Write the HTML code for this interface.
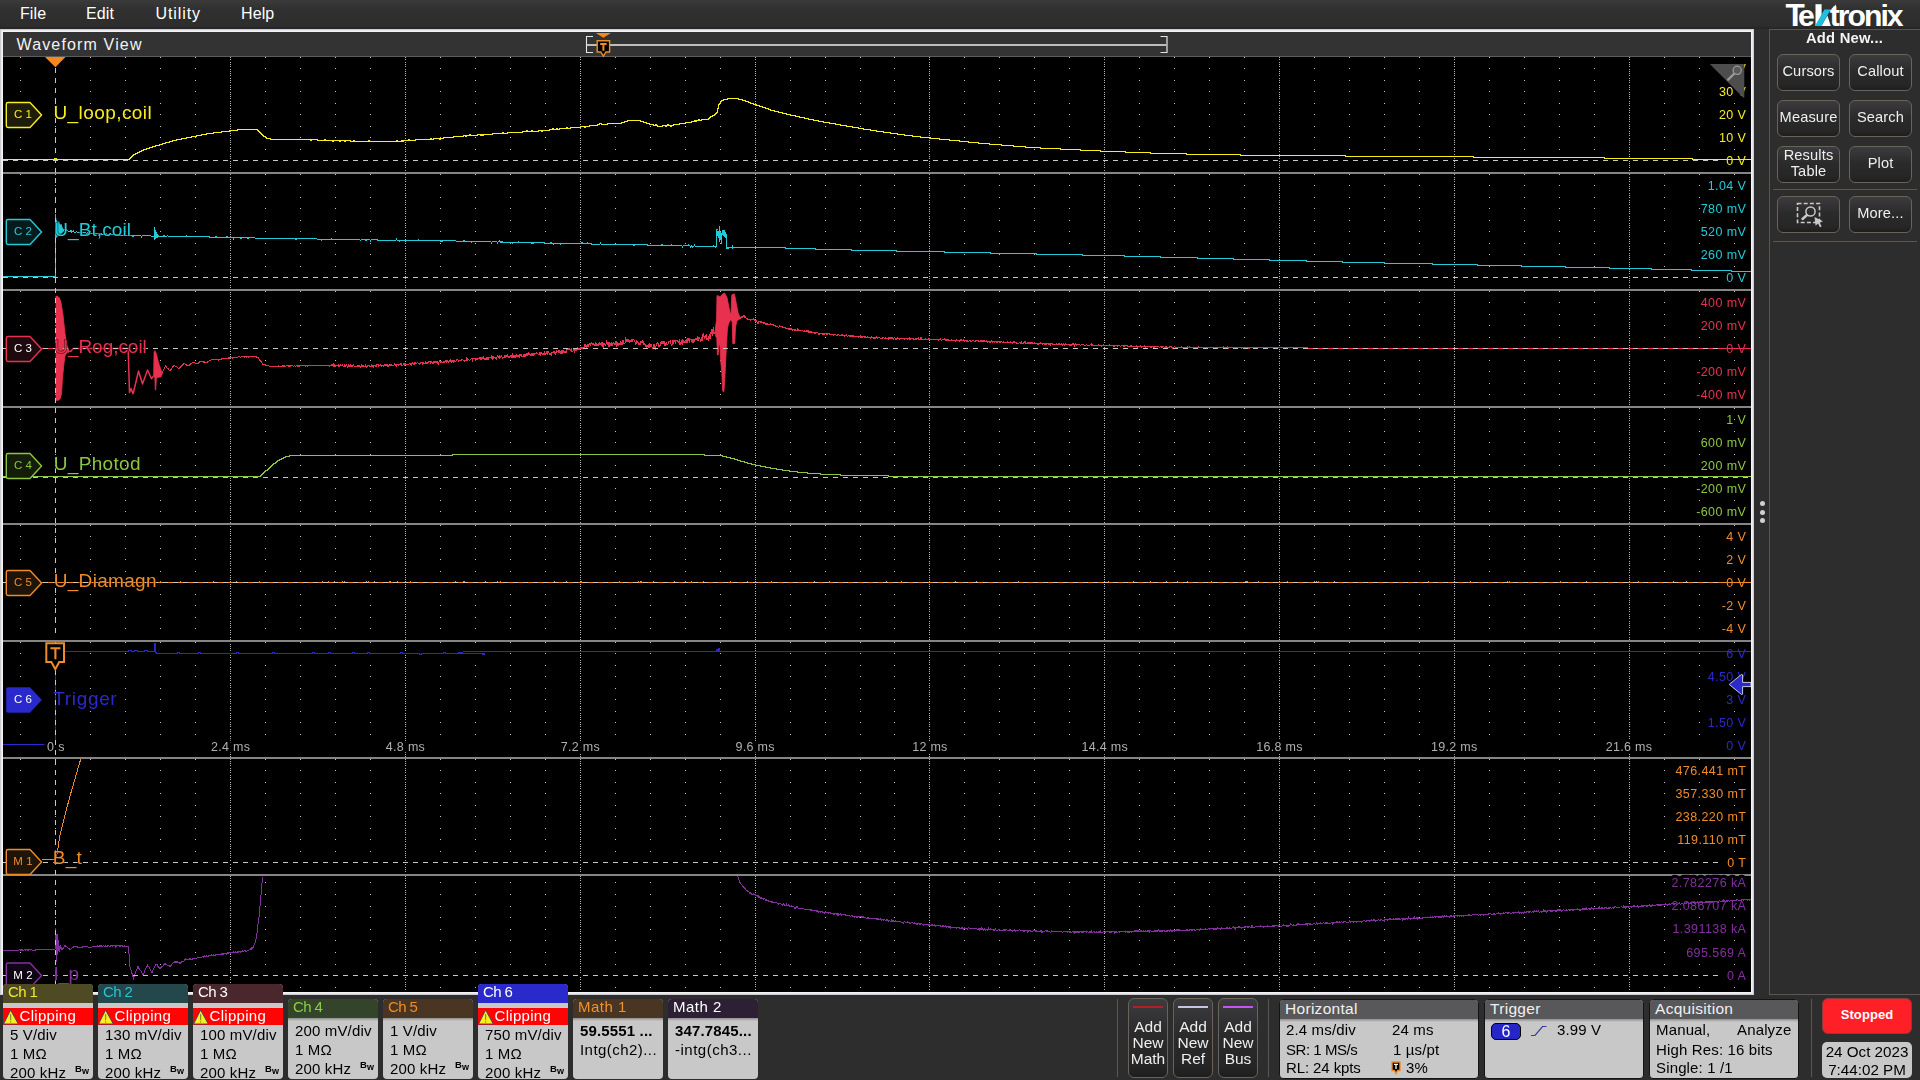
<!DOCTYPE html>
<html><head><meta charset="utf-8"><title>Scope</title>
<style>
*{box-sizing:border-box}
html,body{margin:0;padding:0;width:1920px;height:1080px;overflow:hidden;background:#2d2d2d;font-family:"Liberation Sans",sans-serif;color:#fff}
.abs{position:absolute}
#top{left:0;top:0;width:1920px;height:29px;background:linear-gradient(#3b3b3b 0,#303030 9px,#2d2d2d 26px,#232323 29px)}
.menu{position:absolute;top:4px;font-size:16px;line-height:20px;color:#fff;letter-spacing:0.1px}
#wvframe{left:3px;top:32px;width:1748px;height:960px;background:#000;box-shadow:0 0 0 1px #f4f4f6,0 0 0 2px #e8e8ec,0 0 0 3px #cdcdd1}
#wvhead{left:3px;top:32px;width:1748px;height:24px;background:#333}
#wvline{left:3px;top:56px;width:1748px;height:1px;background:#5c5c5c}
#wvtitle{left:16.5px;top:35px;font-size:16px;line-height:20px;letter-spacing:1.15px;color:#f2f2f2}
#plot{left:0;top:0;width:1920px;height:1080px;will-change:transform}
.dot{fill:none;stroke:#c4c4c4;stroke-width:1;stroke-dasharray:1 10.5;shape-rendering:crispEdges}
.vdot{stroke:#b4b4b4;stroke-width:1;stroke-dasharray:1 1.3;shape-rendering:crispEdges}
.zd{stroke:#c8c8c8;stroke-width:1;stroke-dasharray:5 5;shape-rendering:crispEdges}
.tagt{font-size:11.5px;text-anchor:middle;letter-spacing:0.1px;font-family:"Liberation Sans",sans-serif}
.wl{font-size:19px;stroke:#000;stroke-width:1.6px;stroke-opacity:0.55;paint-order:stroke;font-family:"Liberation Sans",sans-serif}
.sc{font-size:12.5px;text-anchor:end;letter-spacing:0.43px;stroke:#000;stroke-width:6.5px;paint-order:stroke;stroke-linejoin:round;font-family:"Liberation Sans",sans-serif}
.tl{font-size:12.5px;text-anchor:middle;letter-spacing:0.3px;fill:#b0b0b0;stroke:#000;stroke-width:6.5px;paint-order:stroke;stroke-linejoin:round;font-family:"Liberation Sans",sans-serif}
#side{left:1769px;top:29px;width:151px;height:966px;border:1px solid #5c5650;border-right:none}
.sbtn{position:absolute;width:63px;height:37px;border:1px solid #6a625b;border-radius:6px;background:linear-gradient(#3c3c3e 0,#2b2b2c 45%,#262626 85%,#1e1e1e 100%);color:#efefef;font-size:14.6px;line-height:16px;display:flex;align-items:center;justify-content:center;text-align:center;letter-spacing:0.15px;padding-bottom:2.6px}
.sep{position:absolute;height:1px;background:#5c5650;left:1773px;width:144px}
.badge{position:absolute;width:90px;border-radius:4px 4px 4px 4px;background:#c8c8c8;overflow:hidden;color:#000}
.bh{height:19px;font-size:15px;line-height:16px;padding-left:5px;letter-spacing:-0.6px;word-spacing:0px}
.bt{position:absolute;left:7px;font-size:15px;line-height:18px;color:#000;white-space:nowrap;letter-spacing:0.15px}
.clip{position:absolute;left:0;top:24px;width:90px;height:17px;background:#ff0404;color:#fff;font-size:15px;line-height:15px;padding-left:16.5px;letter-spacing:0.3px}
.bw{position:absolute;right:4px;font-size:9px;line-height:10px;color:#000}
.ibox{position:absolute;top:999px;height:79.5px;border-radius:4px;background:#c8c8c8;border:1px solid #141414;overflow:hidden;color:#000}
.ih{height:19px;background:#58585a;color:#f0f0f0;font-size:15.5px;line-height:18px;padding-left:5px;letter-spacing:0.3px}
.it{position:absolute;font-size:15px;line-height:18px;white-space:nowrap;letter-spacing:0.15px}
.abtn{position:absolute;top:998px;width:40px;height:80px;border:1px solid #6a625b;border-radius:6px;background:linear-gradient(#3c3c3e 0,#2b2b2c 45%,#262626 85%,#1e1e1e 100%);color:#efefef;font-size:15.5px;line-height:16px;text-align:center;padding-top:19.5px}
.abtn i{position:absolute;left:4px;right:4px;top:7px;height:2px}
</style></head><body>
<div id="top" class="abs"></div>
<span class="menu" style="left:20px">File</span><span class="menu" style="left:86px">Edit</span><span class="menu" style="left:155.5px;letter-spacing:0.9px">Utility</span><span class="menu" style="left:241px">Help</span>
<svg class="abs" style="left:1780px;top:0px" width="130" height="29" viewBox="0 0 130 29"><g font-family="Liberation Sans, sans-serif" font-weight="bold" font-size="30.2" fill="#fff"><text x="5.6" y="25.9" font-size="31.6">T</text><text x="17.9" y="25.9">e</text><text x="49.8" y="25.9" letter-spacing="-2">tronix</text></g><rect x="35.5" y="4.2" width="6.1" height="21.7" fill="#fff"/><path d="M41.4 25.9 L47.4 15.4 L50.8 25.9Z" fill="#fff"/><path d="M50.6 9.8 L55.9 4.6 V9.8Z" fill="#fff"/><path d="M34.9 25.9 H41.3 L50.7 9.4 H44.4Z" fill="#1fbfe0"/></svg>

<div id="wvframe" class="abs"></div>
<div id="wvhead" class="abs"></div><div id="wvline" class="abs"></div>
<div id="wvtitle" class="abs">Waveform View</div>
<svg id="plot" class="abs" viewBox="0 0 1920 1080">
<defs><clipPath id="pc"><rect x="3" y="57" width="1748" height="935"/></clipPath></defs>
<g clip-path="url(#pc)">
<path d="M20.5 56.9V161.5M20.5 173.9V278.5M20.5 290.9V395.5M20.5 407.9V512.5M20.5 524.9V629.5M20.5 641.9V735.0M20.5 758.9V863.5" class="dot"/>
<path d="M20.5 882.4V991" class="dot" style="stroke-dasharray:1 10.6"/>
<path d="M55.5 56.9V161.5M55.5 173.9V278.5M55.5 290.9V395.5M55.5 407.9V512.5M55.5 524.9V629.5M55.5 641.9V735.0M55.5 758.9V863.5" class="dot"/>
<path d="M55.5 882.4V991" class="dot" style="stroke-dasharray:1 10.6"/>
<path d="M90.5 56.9V161.5M90.5 173.9V278.5M90.5 290.9V395.5M90.5 407.9V512.5M90.5 524.9V629.5M90.5 641.9V735.0M90.5 758.9V863.5" class="dot"/>
<path d="M90.5 882.4V991" class="dot" style="stroke-dasharray:1 10.6"/>
<path d="M125.5 56.9V161.5M125.5 173.9V278.5M125.5 290.9V395.5M125.5 407.9V512.5M125.5 524.9V629.5M125.5 641.9V735.0M125.5 758.9V863.5" class="dot"/>
<path d="M125.5 882.4V991" class="dot" style="stroke-dasharray:1 10.6"/>
<path d="M160.5 56.9V161.5M160.5 173.9V278.5M160.5 290.9V395.5M160.5 407.9V512.5M160.5 524.9V629.5M160.5 641.9V735.0M160.5 758.9V863.5" class="dot"/>
<path d="M160.5 882.4V991" class="dot" style="stroke-dasharray:1 10.6"/>
<path d="M195.5 56.9V161.5M195.5 173.9V278.5M195.5 290.9V395.5M195.5 407.9V512.5M195.5 524.9V629.5M195.5 641.9V735.0M195.5 758.9V863.5" class="dot"/>
<path d="M195.5 882.4V991" class="dot" style="stroke-dasharray:1 10.6"/>
<path d="M265.5 56.9V161.5M265.5 173.9V278.5M265.5 290.9V395.5M265.5 407.9V512.5M265.5 524.9V629.5M265.5 641.9V735.0M265.5 758.9V863.5" class="dot"/>
<path d="M265.5 882.4V991" class="dot" style="stroke-dasharray:1 10.6"/>
<path d="M300.5 56.9V161.5M300.5 173.9V278.5M300.5 290.9V395.5M300.5 407.9V512.5M300.5 524.9V629.5M300.5 641.9V735.0M300.5 758.9V863.5" class="dot"/>
<path d="M300.5 882.4V991" class="dot" style="stroke-dasharray:1 10.6"/>
<path d="M335.5 56.9V161.5M335.5 173.9V278.5M335.5 290.9V395.5M335.5 407.9V512.5M335.5 524.9V629.5M335.5 641.9V735.0M335.5 758.9V863.5" class="dot"/>
<path d="M335.5 882.4V991" class="dot" style="stroke-dasharray:1 10.6"/>
<path d="M370.5 56.9V161.5M370.5 173.9V278.5M370.5 290.9V395.5M370.5 407.9V512.5M370.5 524.9V629.5M370.5 641.9V735.0M370.5 758.9V863.5" class="dot"/>
<path d="M370.5 882.4V991" class="dot" style="stroke-dasharray:1 10.6"/>
<path d="M440.5 56.9V161.5M440.5 173.9V278.5M440.5 290.9V395.5M440.5 407.9V512.5M440.5 524.9V629.5M440.5 641.9V735.0M440.5 758.9V863.5" class="dot"/>
<path d="M440.5 882.4V991" class="dot" style="stroke-dasharray:1 10.6"/>
<path d="M475.5 56.9V161.5M475.5 173.9V278.5M475.5 290.9V395.5M475.5 407.9V512.5M475.5 524.9V629.5M475.5 641.9V735.0M475.5 758.9V863.5" class="dot"/>
<path d="M475.5 882.4V991" class="dot" style="stroke-dasharray:1 10.6"/>
<path d="M510.5 56.9V161.5M510.5 173.9V278.5M510.5 290.9V395.5M510.5 407.9V512.5M510.5 524.9V629.5M510.5 641.9V735.0M510.5 758.9V863.5" class="dot"/>
<path d="M510.5 882.4V991" class="dot" style="stroke-dasharray:1 10.6"/>
<path d="M545.5 56.9V161.5M545.5 173.9V278.5M545.5 290.9V395.5M545.5 407.9V512.5M545.5 524.9V629.5M545.5 641.9V735.0M545.5 758.9V863.5" class="dot"/>
<path d="M545.5 882.4V991" class="dot" style="stroke-dasharray:1 10.6"/>
<path d="M615.5 56.9V161.5M615.5 173.9V278.5M615.5 290.9V395.5M615.5 407.9V512.5M615.5 524.9V629.5M615.5 641.9V735.0M615.5 758.9V863.5" class="dot"/>
<path d="M615.5 882.4V991" class="dot" style="stroke-dasharray:1 10.6"/>
<path d="M650.5 56.9V161.5M650.5 173.9V278.5M650.5 290.9V395.5M650.5 407.9V512.5M650.5 524.9V629.5M650.5 641.9V735.0M650.5 758.9V863.5" class="dot"/>
<path d="M650.5 882.4V991" class="dot" style="stroke-dasharray:1 10.6"/>
<path d="M685.5 56.9V161.5M685.5 173.9V278.5M685.5 290.9V395.5M685.5 407.9V512.5M685.5 524.9V629.5M685.5 641.9V735.0M685.5 758.9V863.5" class="dot"/>
<path d="M685.5 882.4V991" class="dot" style="stroke-dasharray:1 10.6"/>
<path d="M720.5 56.9V161.5M720.5 173.9V278.5M720.5 290.9V395.5M720.5 407.9V512.5M720.5 524.9V629.5M720.5 641.9V735.0M720.5 758.9V863.5" class="dot"/>
<path d="M720.5 882.4V991" class="dot" style="stroke-dasharray:1 10.6"/>
<path d="M790.5 56.9V161.5M790.5 173.9V278.5M790.5 290.9V395.5M790.5 407.9V512.5M790.5 524.9V629.5M790.5 641.9V735.0M790.5 758.9V863.5" class="dot"/>
<path d="M790.5 882.4V991" class="dot" style="stroke-dasharray:1 10.6"/>
<path d="M825.5 56.9V161.5M825.5 173.9V278.5M825.5 290.9V395.5M825.5 407.9V512.5M825.5 524.9V629.5M825.5 641.9V735.0M825.5 758.9V863.5" class="dot"/>
<path d="M825.5 882.4V991" class="dot" style="stroke-dasharray:1 10.6"/>
<path d="M860.5 56.9V161.5M860.5 173.9V278.5M860.5 290.9V395.5M860.5 407.9V512.5M860.5 524.9V629.5M860.5 641.9V735.0M860.5 758.9V863.5" class="dot"/>
<path d="M860.5 882.4V991" class="dot" style="stroke-dasharray:1 10.6"/>
<path d="M894.5 56.9V161.5M894.5 173.9V278.5M894.5 290.9V395.5M894.5 407.9V512.5M894.5 524.9V629.5M894.5 641.9V735.0M894.5 758.9V863.5" class="dot"/>
<path d="M894.5 882.4V991" class="dot" style="stroke-dasharray:1 10.6"/>
<path d="M964.5 56.9V161.5M964.5 173.9V278.5M964.5 290.9V395.5M964.5 407.9V512.5M964.5 524.9V629.5M964.5 641.9V735.0M964.5 758.9V863.5" class="dot"/>
<path d="M964.5 882.4V991" class="dot" style="stroke-dasharray:1 10.6"/>
<path d="M999.5 56.9V161.5M999.5 173.9V278.5M999.5 290.9V395.5M999.5 407.9V512.5M999.5 524.9V629.5M999.5 641.9V735.0M999.5 758.9V863.5" class="dot"/>
<path d="M999.5 882.4V991" class="dot" style="stroke-dasharray:1 10.6"/>
<path d="M1034.5 56.9V161.5M1034.5 173.9V278.5M1034.5 290.9V395.5M1034.5 407.9V512.5M1034.5 524.9V629.5M1034.5 641.9V735.0M1034.5 758.9V863.5" class="dot"/>
<path d="M1034.5 882.4V991" class="dot" style="stroke-dasharray:1 10.6"/>
<path d="M1069.5 56.9V161.5M1069.5 173.9V278.5M1069.5 290.9V395.5M1069.5 407.9V512.5M1069.5 524.9V629.5M1069.5 641.9V735.0M1069.5 758.9V863.5" class="dot"/>
<path d="M1069.5 882.4V991" class="dot" style="stroke-dasharray:1 10.6"/>
<path d="M1139.5 56.9V161.5M1139.5 173.9V278.5M1139.5 290.9V395.5M1139.5 407.9V512.5M1139.5 524.9V629.5M1139.5 641.9V735.0M1139.5 758.9V863.5" class="dot"/>
<path d="M1139.5 882.4V991" class="dot" style="stroke-dasharray:1 10.6"/>
<path d="M1174.5 56.9V161.5M1174.5 173.9V278.5M1174.5 290.9V395.5M1174.5 407.9V512.5M1174.5 524.9V629.5M1174.5 641.9V735.0M1174.5 758.9V863.5" class="dot"/>
<path d="M1174.5 882.4V991" class="dot" style="stroke-dasharray:1 10.6"/>
<path d="M1209.5 56.9V161.5M1209.5 173.9V278.5M1209.5 290.9V395.5M1209.5 407.9V512.5M1209.5 524.9V629.5M1209.5 641.9V735.0M1209.5 758.9V863.5" class="dot"/>
<path d="M1209.5 882.4V991" class="dot" style="stroke-dasharray:1 10.6"/>
<path d="M1244.5 56.9V161.5M1244.5 173.9V278.5M1244.5 290.9V395.5M1244.5 407.9V512.5M1244.5 524.9V629.5M1244.5 641.9V735.0M1244.5 758.9V863.5" class="dot"/>
<path d="M1244.5 882.4V991" class="dot" style="stroke-dasharray:1 10.6"/>
<path d="M1314.5 56.9V161.5M1314.5 173.9V278.5M1314.5 290.9V395.5M1314.5 407.9V512.5M1314.5 524.9V629.5M1314.5 641.9V735.0M1314.5 758.9V863.5" class="dot"/>
<path d="M1314.5 882.4V991" class="dot" style="stroke-dasharray:1 10.6"/>
<path d="M1349.5 56.9V161.5M1349.5 173.9V278.5M1349.5 290.9V395.5M1349.5 407.9V512.5M1349.5 524.9V629.5M1349.5 641.9V735.0M1349.5 758.9V863.5" class="dot"/>
<path d="M1349.5 882.4V991" class="dot" style="stroke-dasharray:1 10.6"/>
<path d="M1384.5 56.9V161.5M1384.5 173.9V278.5M1384.5 290.9V395.5M1384.5 407.9V512.5M1384.5 524.9V629.5M1384.5 641.9V735.0M1384.5 758.9V863.5" class="dot"/>
<path d="M1384.5 882.4V991" class="dot" style="stroke-dasharray:1 10.6"/>
<path d="M1419.5 56.9V161.5M1419.5 173.9V278.5M1419.5 290.9V395.5M1419.5 407.9V512.5M1419.5 524.9V629.5M1419.5 641.9V735.0M1419.5 758.9V863.5" class="dot"/>
<path d="M1419.5 882.4V991" class="dot" style="stroke-dasharray:1 10.6"/>
<path d="M1489.5 56.9V161.5M1489.5 173.9V278.5M1489.5 290.9V395.5M1489.5 407.9V512.5M1489.5 524.9V629.5M1489.5 641.9V735.0M1489.5 758.9V863.5" class="dot"/>
<path d="M1489.5 882.4V991" class="dot" style="stroke-dasharray:1 10.6"/>
<path d="M1524.5 56.9V161.5M1524.5 173.9V278.5M1524.5 290.9V395.5M1524.5 407.9V512.5M1524.5 524.9V629.5M1524.5 641.9V735.0M1524.5 758.9V863.5" class="dot"/>
<path d="M1524.5 882.4V991" class="dot" style="stroke-dasharray:1 10.6"/>
<path d="M1559.5 56.9V161.5M1559.5 173.9V278.5M1559.5 290.9V395.5M1559.5 407.9V512.5M1559.5 524.9V629.5M1559.5 641.9V735.0M1559.5 758.9V863.5" class="dot"/>
<path d="M1559.5 882.4V991" class="dot" style="stroke-dasharray:1 10.6"/>
<path d="M1594.5 56.9V161.5M1594.5 173.9V278.5M1594.5 290.9V395.5M1594.5 407.9V512.5M1594.5 524.9V629.5M1594.5 641.9V735.0M1594.5 758.9V863.5" class="dot"/>
<path d="M1594.5 882.4V991" class="dot" style="stroke-dasharray:1 10.6"/>
<path d="M1664.5 56.9V161.5M1664.5 173.9V278.5M1664.5 290.9V395.5M1664.5 407.9V512.5M1664.5 524.9V629.5M1664.5 641.9V735.0M1664.5 758.9V863.5" class="dot"/>
<path d="M1664.5 882.4V991" class="dot" style="stroke-dasharray:1 10.6"/>
<path d="M1699.5 56.9V161.5M1699.5 173.9V278.5M1699.5 290.9V395.5M1699.5 407.9V512.5M1699.5 524.9V629.5M1699.5 641.9V735.0M1699.5 758.9V863.5" class="dot"/>
<path d="M1699.5 882.4V991" class="dot" style="stroke-dasharray:1 10.6"/>
<path d="M1734.5 56.9V161.5M1734.5 173.9V278.5M1734.5 290.9V395.5M1734.5 407.9V512.5M1734.5 524.9V629.5M1734.5 641.9V735.0M1734.5 758.9V863.5" class="dot"/>
<path d="M1734.5 882.4V991" class="dot" style="stroke-dasharray:1 10.6"/>
<line x1="230.7" x2="230.7" y1="57" y2="990" class="vdot"/>
<line x1="405.5" x2="405.5" y1="57" y2="990" class="vdot"/>
<line x1="580.3" x2="580.3" y1="57" y2="990" class="vdot"/>
<line x1="755.1" x2="755.1" y1="57" y2="990" class="vdot"/>
<line x1="929.9" x2="929.9" y1="57" y2="990" class="vdot"/>
<line x1="1104.7" x2="1104.7" y1="57" y2="990" class="vdot"/>
<line x1="1279.6" x2="1279.6" y1="57" y2="990" class="vdot"/>
<line x1="1454.4" x2="1454.4" y1="57" y2="990" class="vdot"/>
<line x1="1629.2" x2="1629.2" y1="57" y2="990" class="vdot"/>
<rect x="3" y="160" width="1748" height="1" fill="#000"/>
<rect x="3" y="277" width="1748" height="1" fill="#000"/>
<rect x="3" y="348" width="1748" height="1" fill="#000"/>
<rect x="3" y="477" width="1748" height="1" fill="#000"/>
<rect x="3" y="582" width="1748" height="1" fill="#000"/>
<rect x="3" y="862" width="1748" height="1" fill="#000"/>
<rect x="3" y="975" width="1748" height="1" fill="#000"/>
<rect x="3" y="172" width="1748" height="2" fill="#858585"/>
<rect x="3" y="289" width="1748" height="2" fill="#858585"/>
<rect x="3" y="406" width="1748" height="2" fill="#858585"/>
<rect x="3" y="523" width="1748" height="2" fill="#858585"/>
<rect x="3" y="640" width="1748" height="2" fill="#858585"/>
<rect x="3" y="757" width="1748" height="2" fill="#858585"/>
<rect x="3" y="874" width="1748" height="2" fill="#858585"/>
<text x="1746.4" y="73.0" class="sc" fill="#f7ee1e">40 V</text>
<text x="1746.4" y="96.0" class="sc" fill="#f7ee1e">30 V</text>
<text x="1746.4" y="119.0" class="sc" fill="#f7ee1e">20 V</text>
<text x="1746.4" y="142.0" class="sc" fill="#f7ee1e">10 V</text>
<text x="1746.4" y="165.0" class="sc" fill="#f7ee1e">0 V</text>
<text x="1746.4" y="190.0" class="sc" fill="#22cbd7">1.04 V</text>
<text x="1746.4" y="213.0" class="sc" fill="#22cbd7">780 mV</text>
<text x="1746.4" y="236.0" class="sc" fill="#22cbd7">520 mV</text>
<text x="1746.4" y="259.0" class="sc" fill="#22cbd7">260 mV</text>
<text x="1746.4" y="282.0" class="sc" fill="#22cbd7">0 V</text>
<text x="1746.4" y="307.0" class="sc" fill="#e8314f">400 mV</text>
<text x="1746.4" y="330.0" class="sc" fill="#e8314f">200 mV</text>
<text x="1746.4" y="353.0" class="sc" fill="#e8314f">0 V</text>
<text x="1746.4" y="376.0" class="sc" fill="#e8314f">-200 mV</text>
<text x="1746.4" y="399.0" class="sc" fill="#e8314f">-400 mV</text>
<text x="1746.4" y="424.0" class="sc" fill="#8cc63f">1 V</text>
<text x="1746.4" y="447.0" class="sc" fill="#8cc63f">600 mV</text>
<text x="1746.4" y="470.0" class="sc" fill="#8cc63f">200 mV</text>
<text x="1746.4" y="493.0" class="sc" fill="#8cc63f">-200 mV</text>
<text x="1746.4" y="516.0" class="sc" fill="#8cc63f">-600 mV</text>
<text x="1746.4" y="541.0" class="sc" fill="#f08c28">4 V</text>
<text x="1746.4" y="564.0" class="sc" fill="#f08c28">2 V</text>
<text x="1746.4" y="587.0" class="sc" fill="#f08c28">0 V</text>
<text x="1746.4" y="610.0" class="sc" fill="#f08c28">-2 V</text>
<text x="1746.4" y="633.0" class="sc" fill="#f08c28">-4 V</text>
<text x="1746.4" y="658.0" class="sc" fill="#2a2acc">6 V</text>
<text x="1746.4" y="681.0" class="sc" fill="#2a2acc">4.50 V</text>
<text x="1746.4" y="704.0" class="sc" fill="#2a2acc">3 V</text>
<text x="1746.4" y="727.0" class="sc" fill="#2a2acc">1.50 V</text>
<text x="1746.4" y="750.0" class="sc" fill="#2a2acc">0 V</text>
<text x="1746.4" y="775.0" class="sc" fill="#f08c28">476.441 mT</text>
<text x="1746.4" y="798.0" class="sc" fill="#f08c28">357.330 mT</text>
<text x="1746.4" y="821.0" class="sc" fill="#f08c28">238.220 mT</text>
<text x="1746.4" y="844.0" class="sc" fill="#f08c28">119.110 mT</text>
<text x="1746.4" y="867.0" class="sc" fill="#f08c28">0 T</text>
<text x="1746.4" y="887.0" class="sc" fill="#83309f">2.782276 kA</text>
<text x="1746.4" y="910.0" class="sc" fill="#83309f">2.086707 kA</text>
<text x="1746.4" y="933.0" class="sc" fill="#83309f">1.391138 kA</text>
<text x="1746.4" y="956.5" class="sc" fill="#83309f">695.569 A</text>
<text x="1746.4" y="980.0" class="sc" fill="#83309f">0 A</text>
<path d="M3.0 159.5H129.0 V158.5H130.0 V157.5H131.0 V156.5H132.0 V155.5H133.0 V154.5H135.0 V153.5H137.0 V152.5H139.0 V151.5H141.0 V150.5H143.0 V149.5H146.0 V148.5H149.0 V147.5H152.0 V146.5H155.0 V145.5H159.0 V144.5H162.0 V143.5H165.0 V142.5H169.0 V141.5H172.0 V140.5H176.0 V139.5H181.0 V138.5H186.0 V137.5H191.0 V136.5H196.0 V135.5H201.0 V134.5H206.0 V133.5H213.0 V132.5H221.0 V131.5H229.0 V130.5H237.0 V129.5H257.0 V130.5H258.0 V131.5H259.0 V132.5H260.0 V133.5H261.0 V134.5H262.0 V135.5H263.0 V136.5H265.0 V137.5H266.0 V138.5H270.0 V139.5H310.0 V140.5H311.0 V139.5H317.0 V140.5H324.0 V139.5H325.0 V140.5H332.0 V141.5H333.0 V140.5H339.0 V141.5H340.0 V140.5H344.0 V141.5H345.0 V140.5H350.0 V141.5H353.0 V140.5H354.0 V141.5H368.0 V140.5H369.0 V141.5H396.0 V140.5H397.0 V141.5H401.0 V140.5H402.0 V141.5H403.0 V140.5H408.0 V139.5H409.0 V140.5H415.0 V139.5H430.0 V138.5H431.0 V139.5H433.0 V138.5H439.0 V139.5H440.0 V138.5H443.0 V137.5H453.0 V136.5H463.0 V135.5H465.0 V136.5H466.0 V135.5H469.0 V134.5H470.0 V135.5H477.0 V134.5H480.0 V135.5H481.0 V134.5H482.0 V135.5H483.0 V134.5H492.0 V133.5H502.0 V132.5H503.0 V133.5H507.0 V132.5H522.0 V131.5H526.0 V130.5H527.0 V131.5H531.0 V130.5H532.0 V131.5H538.0 V130.5H541.0 V131.5H542.0 V130.5H549.0 V129.5H552.0 V128.5H553.0 V129.5H556.0 V128.5H557.0 V129.5H559.0 V128.5H566.0 V127.5H567.0 V128.5H570.0 V127.5H580.0 V126.5H584.0 V127.5H585.0 V126.5H589.0 V125.5H597.0 V124.5H599.0 V123.5H601.0 V124.5H607.0 V123.5H621.0 V122.5H624.0 V121.5H627.0 V120.5H640.0 V121.5H643.0 V122.5H646.0 V123.5H649.0 V124.5H653.0 V125.5H655.0 V124.5H656.0 V125.5H657.0 V126.5H662.0 V125.5H665.0 V126.5H666.0 V125.5H667.0 V124.5H668.0 V125.5H670.0 V126.5H671.0 V125.5H673.0 V124.5H679.0 V123.5H685.0 V122.5H691.0 V121.5H694.0 V120.5H695.0 V121.5H696.0 V120.5H698.0 V119.5H699.0 V120.5H701.0 V119.5H708.0 V118.5H709.0 V117.5H710.0 V116.5H712.0 V115.5H714.0 V114.5H715.0 V113.5H716.0 V112.5H717.0 V108.5H718.0 V104.5H719.0 V103.5H720.0 V101.5H721.0 V100.5H723.0 V99.5H727.0 V98.5H738.0 V99.5H742.0 V100.5H745.0 V101.5H748.0 V102.5H750.0 V103.5H753.0 V104.5H756.0 V105.5H759.0 V106.5H762.0 V107.5H765.0 V108.5H768.0 V109.5H770.0 V110.5H774.0 V111.5H778.0 V112.5H782.0 V113.5H786.0 V114.5H790.0 V115.5H795.0 V116.5H799.0 V117.5H804.0 V118.5H808.0 V119.5H813.0 V120.5H818.0 V121.5H823.0 V122.5H829.0 V123.5H835.0 V124.5H840.0 V125.5H846.0 V126.5H852.0 V127.5H858.0 V128.5H863.0 V129.5H870.0 V130.5H876.0 V131.5H883.0 V132.5H890.0 V133.5H897.0 V134.5H904.0 V135.5H912.0 V136.5H920.0 V137.5H930.0 V138.5H939.0 V139.5H949.0 V140.5H959.0 V141.5H968.0 V142.5H978.0 V143.5H989.0 V144.5H1001.0 V145.5H1013.0 V146.5H1025.0 V147.5H1040.0 V148.5H1060.0 V149.5H1080.0 V150.5H1100.0 V151.5H1125.0 V152.5H1150.0 V153.5H1186.0 V154.5H1240.0 V155.5H1345.0 V156.5H1473.0 V157.5H1604.0 V158.5H1692.0 V159.5H1751.0" fill="none" stroke="#f7ee1e" stroke-width="1" shape-rendering="crispEdges" />
<rect x="54" y="158" width="3" height="3" fill="#f7ee1e"/>
<path d="M55.5 214 L56.5 220 L58 222.5 L59 221 L60 224.5 L61.5 224 L62.5 227.5 L64 230 L63.5 232 L61.5 233.5 L59.5 235 L57.5 236.5 L56.5 238 L55.5 236Z" fill="#22cbd7"/>
<path d="M3 276.5 H55.5 V214 M63 230.5 L64.0 229.7 L64.5 229.3 L65.0 230.2 L65.5 229.2 L66.0 229.3 L66.5 230.1 L67.0 230.0 L67.5 230.9 L68.0 230.8 L68.5 231.3 L69.0 231.1 L69.5 231.2 L70.0 231.6 L70.5 230.7 L71.0 230.7 L71.5 231.9 L72.0 230.6 L72.5 231.6 L73.0 231.6 L73.5 230.9 L74.0 232.0 L74.5 232.1 L75.0 231.9 L75.5 232.1 L76.0 232.2 L76.5 231.8 L77.0 232.1 L77.5 232.1 L78.0 232.3 L78.5 232.4 L79.0 232.4 L79.5 232.3 L80.0 232.3 L80.5 232.4 L81.0 232.4 L81.5 232.5 L82.0 232.5 L82.5 232.5 L83.0 232.6 L83.5 232.6 L84.0 232.7 L84.5 232.7 L85.0 232.8 L85.5 232.8 L86.0 232.8 L86.5 233.7 L87.0 232.9 L87.5 233.0 L88.0 233.0 L88.5 233.0 L89.0 233.1 L89.5 233.1 L90.0 233.2 L90.5 233.2 L91.0 233.2 L91.5 233.3 L92.0 233.3 L92.5 233.4 L93.0 233.4 L93.5 233.5 L94.0 233.5 L94.5 233.5 L95.0 233.6 L95.5 233.6 L96.0 233.7 L96.5 233.7 L97.0 233.8 L97.5 233.8 L98.0 233.8 L98.5 233.9 L99.0 233.9 L99.5 234.0 L100.0 234.0 L100.5 234.0 L101.0 233.2 L101.5 234.1 L102.0 234.1 L102.5 234.1 L103.0 234.2 L103.5 234.2 L104.0 234.2 L104.5 234.2 L105.0 234.2 L105.5 234.3 L106.0 234.3 L106.5 233.5 L107.0 234.3 L107.5 234.4 L108.0 234.4 L108.5 234.4 L109.0 234.4 L109.5 234.5 L110.0 234.5 L110.5 234.5 L111.0 234.6 L111.5 234.6 L112.0 234.6 L112.5 234.6 L113.0 234.7 L113.5 234.7 L114.0 234.7 L114.5 234.7 L115.0 234.8 L115.5 234.8 L116.0 234.8 L116.5 234.8 L117.0 234.8 L117.5 234.9 L118.0 234.9 L118.5 234.9 L119.0 234.9 L119.5 235.0 L120.0 235.0 L120.5 235.0 L121.0 235.1 L121.5 235.1 L122.0 235.1 L122.5 235.1 L123.0 235.2 L123.5 235.2 L124.0 235.2 L124.5 235.2 L125.0 235.2 L125.5 235.3 L126.0 235.3 L126.5 235.3 L127.0 235.3 L127.5 235.4 L128.0 235.4 L128.5 235.4 L129.0 235.4 L129.5 235.5 L130.0 235.5 L130.5 235.5 L131.0 235.5 L131.5 235.5 L132.0 235.5 L132.5 235.6 L133.0 236.4 L133.5 235.6 L134.0 235.6 L134.5 235.6 L135.0 235.6 L135.5 235.6 L136.0 235.6 L136.5 235.6 L137.0 235.7 L137.5 235.7 L138.0 235.7 L138.5 235.7 L139.0 235.7 L139.5 235.7 L140.0 235.7 L140.5 235.7 L141.0 235.7 L141.5 236.6 L142.0 235.8 L142.5 235.8 L143.0 235.8 L143.5 235.8 L144.0 235.8 L144.5 235.8 L145.0 235.8 L145.5 235.8 L146.0 235.8 L146.5 235.9 L147.0 235.9 L147.5 235.9 L148.0 235.9 L148.5 235.9 L149.0 235.9 L149.5 235.9 L150.0 235.9 L150.5 235.9 L151.0 236.0 L151.5 236.0 L152.0 236.0 L152.5 236.0 L153.0 236.0 L153.5 236.0 L154.0 236.1 L154.5 236.9 L155.0 236.1 L155.5 236.1 L156.0 236.1 L156.5 236.2 L157.0 236.2 L157.5 237.0 L158.0 236.2 L158.5 236.2 L159.0 236.2 L159.5 236.2 L160.0 236.2 L160.5 236.2 L161.0 236.3 L161.5 236.3 L162.0 236.3 L162.5 236.3 L163.0 236.3 L163.5 236.3 L164.0 235.5 L164.5 236.3 L165.0 236.3 L165.5 236.3 L166.0 236.3 L166.5 236.3 L167.0 236.3 L167.5 235.5 L168.0 236.3 L168.5 236.3 L169.0 236.4 L169.5 236.4 L170.0 237.2 L170.5 236.4 L171.0 236.4 L171.5 236.4 L172.0 236.4 L172.5 236.4 L173.0 236.4 L173.5 236.4 L174.0 236.4 L174.5 236.4 L175.0 236.4 L175.5 236.4 L176.0 236.4 L176.5 236.4 L177.0 236.5 L177.5 236.5 L178.0 236.5 L178.5 236.5 L179.0 236.5 L179.5 236.5 L180.0 236.5 L180.5 236.5 L181.0 236.5 L181.5 236.5 L182.0 236.5 L182.5 236.5 L183.0 236.5 L183.5 236.5 L184.0 236.5 L184.5 236.6 L185.0 236.6 L185.5 236.6 L186.0 236.6 L186.5 235.8 L187.0 236.6 L187.5 236.6 L188.0 236.6 L188.5 236.6 L189.0 236.6 L189.5 236.6 L190.0 236.6 L190.5 236.6 L191.0 236.6 L191.5 236.6 L192.0 236.6 L192.5 236.7 L193.0 236.7 L193.5 236.7 L194.0 236.7 L194.5 236.7 L195.0 236.7 L195.5 236.7 L196.0 236.7 L196.5 236.7 L197.0 236.7 L197.5 236.7 L198.0 236.7 L198.5 236.7 L199.0 236.7 L199.5 236.7 L200.0 236.8 L200.5 236.8 L201.0 236.8 L201.5 236.8 L202.0 236.8 L202.5 236.8 L203.0 236.8 L203.5 236.8 L204.0 236.8 L204.5 236.8 L205.0 236.9 L205.5 236.9 L206.0 236.9 L206.5 236.9 L207.0 236.9 L207.5 236.9 L208.0 236.9 L208.5 236.9 L209.0 236.9 L209.5 237.0 L210.0 237.0 L210.5 237.0 L211.0 237.0 L211.5 237.0 L212.0 237.0 L212.5 237.0 L213.0 237.0 L213.5 237.0 L214.0 237.1 L214.5 237.1 L215.0 237.1 L215.5 237.1 L216.0 236.3 L216.5 237.1 L217.0 237.1 L217.5 237.1 L218.0 237.1 L218.5 237.2 L219.0 237.2 L219.5 237.2 L220.0 237.2 L220.5 237.2 L221.0 237.2 L221.5 237.2 L222.0 237.2 L222.5 237.2 L223.0 237.3 L223.5 237.3 L224.0 237.3 L224.5 237.3 L225.0 237.3 L225.5 237.3 L226.0 237.3 L226.5 237.3 L227.0 236.5 L227.5 236.6 L228.0 237.4 L228.5 237.4 L229.0 237.4 L229.5 237.4 L230.0 237.4 L230.5 237.4 L231.0 237.4 L231.5 237.4 L232.0 237.5 L232.5 237.5 L233.0 236.7 L233.5 238.3 L234.0 236.7 L234.5 237.5 L235.0 237.5 L235.5 237.5 L236.0 237.5 L236.5 237.6 L237.0 237.6 L237.5 237.6 L238.0 237.6 L238.5 237.6 L239.0 237.6 L239.5 237.6 L240.0 237.6 L240.5 237.6 L241.0 238.4 L241.5 237.7 L242.0 236.9 L242.5 237.7 L243.0 237.7 L243.5 237.7 L244.0 237.7 L244.5 237.7 L245.0 237.7 L245.5 237.7 L246.0 237.8 L246.5 237.8 L247.0 237.8 L247.5 237.8 L248.0 238.6 L248.5 237.8 L249.0 237.8 L249.5 237.8 L250.0 237.0 L250.5 237.9 L251.0 237.9 L251.5 237.9 L252.0 237.9 L252.5 237.9 L253.0 237.9 L253.5 237.9 L254.0 237.9 L254.5 237.9 L255.0 238.0 L255.5 238.0 L256.0 238.0 L256.5 238.0 L257.0 238.0 L257.5 238.0 L258.0 238.0 L258.5 238.0 L259.0 238.0 L259.5 238.0 L260.0 238.0 L260.5 238.1 L261.0 238.1 L261.5 238.1 L262.0 238.1 L262.5 238.1 L263.0 238.1 L263.5 238.1 L264.0 238.1 L264.5 238.1 L265.0 238.1 L265.5 238.1 L266.0 238.1 L266.5 238.2 L267.0 238.2 L267.5 238.2 L268.0 238.2 L268.5 238.2 L269.0 238.2 L269.5 238.2 L270.0 238.2 L270.5 238.2 L271.0 238.2 L271.5 238.2 L272.0 239.0 L272.5 238.2 L273.0 238.3 L273.5 238.3 L274.0 238.3 L274.5 238.3 L275.0 238.3 L275.5 238.3 L276.0 238.3 L276.5 238.3 L277.0 238.3 L277.5 238.3 L278.0 238.3 L278.5 238.3 L279.0 238.3 L279.5 238.4 L280.0 238.4 L280.5 238.4 L281.0 238.4 L281.5 238.4 L282.0 238.4 L282.5 238.4 L283.0 238.4 L283.5 238.4 L284.0 238.4 L284.5 238.4 L285.0 238.4 L285.5 238.5 L286.0 238.5 L286.5 238.5 L287.0 238.5 L287.5 238.5 L288.0 238.5 L288.5 238.5 L289.0 238.5 L289.5 238.5 L290.0 238.5 L290.5 238.5 L291.0 238.5 L291.5 238.5 L292.0 237.8 L292.5 238.6 L293.0 238.6 L293.5 238.6 L294.0 238.6 L294.5 238.6 L295.0 238.6 L295.5 238.6 L296.0 239.4 L296.5 238.6 L297.0 238.6 L297.5 238.6 L298.0 238.7 L298.5 238.7 L299.0 238.7 L299.5 238.7 L300.0 238.7 L300.5 238.7 L301.0 238.7 L301.5 238.7 L302.0 238.7 L302.5 238.7 L303.0 238.7 L303.5 238.7 L304.0 238.7 L304.5 238.8 L305.0 238.8 L305.5 238.8 L306.0 238.8 L306.5 238.8 L307.0 238.8 L307.5 238.8 L308.0 238.8 L308.5 238.8 L309.0 238.8 L309.5 238.8 L310.0 238.8 L310.5 238.8 L311.0 238.9 L311.5 238.9 L312.0 238.9 L312.5 238.9 L313.0 238.9 L313.5 238.9 L314.0 238.9 L314.5 238.9 L315.0 238.9 L315.5 238.9 L316.0 238.9 L316.5 238.9 L317.0 239.0 L317.5 239.0 L318.0 239.0 L318.5 239.0 L319.0 239.0 L319.5 239.0 L320.0 239.0 L320.5 239.0 L321.0 239.0 L321.5 239.8 L322.0 239.0 L322.5 239.0 L323.0 239.1 L323.5 239.1 L324.0 239.1 L324.5 239.1 L325.0 239.1 L325.5 239.1 L326.0 239.1 L326.5 239.1 L327.0 239.1 L327.5 239.1 L328.0 239.1 L328.5 239.1 L329.0 239.2 L329.5 239.2 L330.0 239.2 L330.5 239.2 L331.0 240.0 L331.5 239.2 L332.0 240.0 L332.5 239.2 L333.0 239.2 L333.5 239.2 L334.0 239.2 L334.5 239.2 L335.0 239.2 L335.5 239.3 L336.0 239.3 L336.5 239.3 L337.0 239.3 L337.5 239.3 L338.0 239.3 L338.5 239.3 L339.0 239.3 L339.5 239.3 L340.0 239.3 L340.5 239.3 L341.0 239.3 L341.5 239.4 L342.0 239.4 L342.5 239.4 L343.0 239.4 L343.5 239.4 L344.0 239.4 L344.5 239.4 L345.0 239.4 L345.5 239.4 L346.0 239.4 L346.5 239.4 L347.0 239.4 L347.5 239.5 L348.0 239.5 L348.5 239.5 L349.0 239.5 L349.5 239.5 L350.0 239.5 L350.5 239.5 L351.0 239.5 L351.5 239.5 L352.0 239.5 L352.5 239.5 L353.0 239.6 L353.5 239.6 L354.0 239.6 L354.5 239.6 L355.0 239.6 L355.5 239.6 L356.0 239.6 L356.5 239.6 L357.0 239.6 L357.5 239.6 L358.0 239.6 L358.5 239.6 L359.0 239.7 L359.5 239.7 L360.0 239.7 L360.5 240.5 L361.0 239.7 L361.5 239.7 L362.0 239.7 L362.5 239.7 L363.0 239.7 L363.5 239.7 L364.0 239.7 L364.5 239.7 L365.0 239.8 L365.5 239.8 L366.0 240.6 L366.5 239.8 L367.0 239.8 L367.5 239.8 L368.0 239.8 L368.5 239.8 L369.0 239.8 L369.5 239.8 L370.0 239.8 L370.5 240.6 L371.0 239.8 L371.5 239.9 L372.0 239.9 L372.5 239.9 L373.0 239.9 L373.5 239.9 L374.0 239.1 L374.5 239.9 L375.0 239.9 L375.5 239.9 L376.0 239.9 L376.5 239.9 L377.0 239.9 L377.5 240.0 L378.0 240.0 L378.5 240.0 L379.0 240.0 L379.5 240.0 L380.0 240.0 L380.5 240.0 L381.0 240.0 L381.5 240.0 L382.0 240.0 L382.5 240.0 L383.0 240.0 L383.5 240.0 L384.0 240.0 L384.5 240.0 L385.0 240.1 L385.5 240.1 L386.0 240.1 L386.5 240.1 L387.0 240.1 L387.5 240.1 L388.0 240.1 L388.5 240.1 L389.0 240.1 L389.5 240.1 L390.0 240.1 L390.5 240.1 L391.0 240.1 L391.5 240.1 L392.0 240.1 L392.5 240.1 L393.0 240.1 L393.5 240.1 L394.0 240.1 L394.5 240.1 L395.0 240.2 L395.5 240.2 L396.0 240.2 L396.5 239.4 L397.0 240.2 L397.5 240.2 L398.0 240.2 L398.5 240.2 L399.0 240.2 L399.5 241.0 L400.0 240.2 L400.5 240.2 L401.0 240.2 L401.5 240.2 L402.0 240.2 L402.5 240.2 L403.0 240.2 L403.5 240.2 L404.0 240.2 L404.5 240.2 L405.0 240.2 L405.5 240.3 L406.0 240.3 L406.5 240.3 L407.0 240.3 L407.5 240.3 L408.0 240.3 L408.5 240.3 L409.0 240.3 L409.5 240.3 L410.0 240.3 L410.5 240.3 L411.0 240.3 L411.5 240.3 L412.0 240.3 L412.5 240.3 L413.0 240.3 L413.5 240.3 L414.0 240.3 L414.5 240.3 L415.0 240.3 L415.5 240.4 L416.0 240.4 L416.5 240.4 L417.0 240.4 L417.5 240.4 L418.0 241.2 L418.5 240.4 L419.0 241.2 L419.5 240.4 L420.0 240.4 L420.5 240.4 L421.0 240.4 L421.5 240.4 L422.0 240.4 L422.5 240.4 L423.0 240.4 L423.5 240.4 L424.0 241.2 L424.5 240.4 L425.0 240.4 L425.5 240.5 L426.0 240.5 L426.5 240.5 L427.0 239.7 L427.5 240.5 L428.0 240.5 L428.5 240.5 L429.0 240.5 L429.5 240.5 L430.0 240.5 L430.5 240.5 L431.0 240.5 L431.5 240.5 L432.0 240.5 L432.5 240.5 L433.0 240.5 L433.5 240.5 L434.0 240.5 L434.5 240.5 L435.0 240.5 L435.5 240.6 L436.0 240.6 L436.5 240.6 L437.0 240.6 L437.5 240.6 L438.0 240.6 L438.5 240.6 L439.0 240.6 L439.5 240.6 L440.0 240.6 L440.5 240.6 L441.0 241.4 L441.5 240.6 L442.0 241.4 L442.5 240.7 L443.0 240.7 L443.5 240.7 L444.0 240.7 L444.5 240.7 L445.0 240.7 L445.5 240.7 L446.0 240.7 L446.5 240.7 L447.0 240.8 L447.5 240.8 L448.0 240.8 L448.5 240.8 L449.0 240.8 L449.5 240.8 L450.0 240.8 L450.5 240.8 L451.0 240.8 L451.5 240.9 L452.0 240.9 L452.5 240.9 L453.0 240.9 L453.5 240.9 L454.0 240.9 L454.5 240.9 L455.0 240.9 L455.5 240.9 L456.0 241.0 L456.5 241.0 L457.0 241.0 L457.5 241.0 L458.0 241.0 L458.5 241.0 L459.0 241.0 L459.5 241.0 L460.0 241.0 L460.5 241.1 L461.0 241.1 L461.5 241.1 L462.0 241.1 L462.5 241.1 L463.0 241.1 L463.5 241.1 L464.0 240.3 L464.5 241.2 L465.0 241.2 L465.5 241.2 L466.0 241.2 L466.5 241.2 L467.0 241.2 L467.5 241.2 L468.0 241.2 L468.5 241.2 L469.0 241.3 L469.5 241.3 L470.0 241.3 L470.5 241.3 L471.0 241.3 L471.5 242.1 L472.0 241.3 L472.5 241.3 L473.0 241.3 L473.5 241.4 L474.0 241.4 L474.5 241.4 L475.0 241.4 L475.5 241.4 L476.0 241.4 L476.5 241.4 L477.0 241.4 L477.5 241.4 L478.0 241.5 L478.5 241.5 L479.0 241.5 L479.5 241.5 L480.0 241.5 L480.5 241.5 L481.0 241.5 L481.5 241.5 L482.0 241.5 L482.5 241.6 L483.0 241.6 L483.5 241.6 L484.0 241.6 L484.5 241.6 L485.0 241.6 L485.5 241.6 L486.0 241.6 L486.5 241.6 L487.0 241.7 L487.5 241.7 L488.0 241.7 L488.5 241.7 L489.0 241.7 L489.5 241.7 L490.0 241.7 L490.5 241.7 L491.0 241.7 L491.5 242.6 L492.0 241.8 L492.5 241.8 L493.0 241.8 L493.5 241.8 L494.0 241.8 L494.5 241.8 L495.0 241.8 L495.5 241.8 L496.0 241.9 L496.5 241.9 L497.0 241.9 L497.5 242.7 L498.0 241.9 L498.5 241.9 L499.0 241.9 L499.5 241.1 L500.0 241.9 L500.5 242.0 L501.0 242.0 L501.5 242.0 L502.0 241.2 L502.5 242.0 L503.0 242.8 L503.5 242.0 L504.0 242.0 L504.5 242.1 L505.0 242.1 L505.5 242.1 L506.0 242.1 L506.5 242.1 L507.0 242.1 L507.5 242.1 L508.0 242.1 L508.5 242.1 L509.0 242.2 L509.5 242.2 L510.0 242.2 L510.5 243.0 L511.0 242.2 L511.5 242.2 L512.0 242.2 L512.5 243.0 L513.0 242.2 L513.5 242.3 L514.0 242.3 L514.5 242.3 L515.0 243.1 L515.5 242.3 L516.0 242.3 L516.5 242.3 L517.0 242.3 L517.5 242.3 L518.0 242.4 L518.5 241.6 L519.0 242.4 L519.5 242.4 L520.0 242.4 L520.5 242.4 L521.0 242.4 L521.5 242.4 L522.0 242.4 L522.5 242.5 L523.0 242.5 L523.5 242.5 L524.0 242.5 L524.5 242.5 L525.0 242.5 L525.5 242.5 L526.0 242.5 L526.5 242.5 L527.0 242.6 L527.5 242.6 L528.0 242.6 L528.5 242.6 L529.0 242.6 L529.5 242.6 L530.0 242.6 L530.5 242.6 L531.0 242.6 L531.5 242.7 L532.0 243.5 L532.5 242.7 L533.0 243.5 L533.5 242.7 L534.0 242.7 L534.5 242.7 L535.0 242.7 L535.5 242.7 L536.0 242.8 L536.5 242.8 L537.0 242.8 L537.5 242.8 L538.0 242.8 L538.5 242.8 L539.0 242.8 L539.5 242.8 L540.0 242.8 L540.5 242.9 L541.0 242.9 L541.5 242.9 L542.0 242.9 L542.5 242.9 L543.0 242.9 L543.5 242.9 L544.0 242.9 L544.5 243.0 L545.0 243.0 L545.5 243.0 L546.0 243.0 L546.5 243.0 L547.0 243.0 L547.5 243.0 L548.0 243.0 L548.5 243.0 L549.0 243.1 L549.5 243.1 L550.0 243.1 L550.5 243.1 L551.0 242.3 L551.5 243.1 L552.0 243.1 L552.5 243.1 L553.0 243.1 L553.5 244.0 L554.0 243.2 L554.5 243.2 L555.0 243.2 L555.5 243.2 L556.0 243.2 L556.5 243.2 L557.0 243.2 L557.5 243.2 L558.0 243.3 L558.5 243.3 L559.0 243.3 L559.5 243.3 L560.0 243.3 L560.5 244.1 L561.0 243.3 L561.5 243.3 L562.0 243.3 L562.5 243.4 L563.0 243.4 L563.5 243.4 L564.0 243.4 L564.5 243.4 L565.0 244.2 L565.5 243.4 L566.0 243.4 L566.5 243.4 L567.0 243.5 L567.5 243.5 L568.0 243.5 L568.5 243.5 L569.0 243.5 L569.5 243.5 L570.0 243.5 L570.5 243.5 L571.0 243.5 L571.5 243.6 L572.0 243.6 L572.5 243.6 L573.0 243.6 L573.5 243.6 L574.0 243.6 L574.5 243.6 L575.0 243.6 L575.5 243.6 L576.0 243.7 L576.5 243.7 L577.0 243.7 L577.5 243.7 L578.0 243.7 L578.5 243.7 L579.0 243.7 L579.5 243.7 L580.0 243.8 L580.5 243.8 L581.0 243.8 L581.5 243.0 L582.0 243.8 L582.5 243.0 L583.0 243.8 L583.5 243.8 L584.0 243.8 L584.5 243.8 L585.0 243.8 L585.5 243.8 L586.0 243.9 L586.5 243.9 L587.0 243.9 L587.5 243.1 L588.0 243.9 L588.5 243.9 L589.0 243.9 L589.5 243.9 L590.0 243.9 L590.5 243.9 L591.0 243.9 L591.5 244.0 L592.0 244.0 L592.5 244.0 L593.0 244.0 L593.5 244.0 L594.0 244.0 L594.5 244.0 L595.0 244.0 L595.5 244.0 L596.0 244.0 L596.5 244.0 L597.0 244.1 L597.5 244.1 L598.0 244.9 L598.5 244.1 L599.0 244.1 L599.5 244.1 L600.0 244.1 L600.5 243.3 L601.0 244.1 L601.5 244.1 L602.0 244.1 L602.5 244.2 L603.0 244.2 L603.5 244.2 L604.0 244.2 L604.5 244.2 L605.0 244.2 L605.5 244.2 L606.0 244.2 L606.5 244.2 L607.0 244.2 L607.5 244.2 L608.0 244.2 L608.5 244.3 L609.0 244.3 L609.5 244.3 L610.0 244.3 L610.5 244.3 L611.0 244.3 L611.5 244.3 L612.0 244.3 L612.5 244.3 L613.0 244.3 L613.5 244.3 L614.0 244.4 L614.5 244.4 L615.0 244.4 L615.5 244.4 L616.0 244.4 L616.5 244.4 L617.0 244.4 L617.5 244.4 L618.0 244.4 L618.5 244.4 L619.0 244.4 L619.5 244.5 L620.0 244.5 L620.5 244.5 L621.0 244.5 L621.5 244.5 L622.0 245.3 L622.5 244.5 L623.0 244.5 L623.5 244.5 L624.0 244.5 L624.5 244.5 L625.0 244.6 L625.5 244.6 L626.0 244.6 L626.5 244.6 L627.0 244.6 L627.5 244.6 L628.0 244.6 L628.5 244.6 L629.0 243.8 L629.5 244.6 L630.0 244.6 L630.5 244.7 L631.0 244.7 L631.5 244.7 L632.0 244.7 L632.5 244.7 L633.0 244.7 L633.5 244.7 L634.0 245.5 L634.5 244.7 L635.0 244.7 L635.5 244.7 L636.0 244.8 L636.5 244.8 L637.0 244.8 L637.5 244.8 L638.0 244.8 L638.5 244.8 L639.0 244.8 L639.5 244.8 L640.0 244.8 L640.5 244.8 L641.0 244.8 L641.5 244.8 L642.0 244.9 L642.5 244.9 L643.0 244.9 L643.5 244.9 L644.0 244.9 L644.5 244.9 L645.0 244.9 L645.5 244.9 L646.0 244.9 L646.5 244.9 L647.0 244.9 L647.5 245.0 L648.0 245.0 L648.5 245.0 L649.0 245.0 L649.5 245.0 L650.0 245.0 L650.5 245.0 L651.0 245.0 L651.5 245.0 L652.0 245.0 L652.5 245.1 L653.0 245.1 L653.5 245.1 L654.0 245.9 L654.5 245.1 L655.0 245.1 L655.5 245.1 L656.0 245.1 L656.5 245.2 L657.0 245.2 L657.5 245.2 L658.0 245.2 L658.5 245.2 L659.0 245.2 L659.5 245.2 L660.0 245.2 L660.5 245.2 L661.0 245.3 L661.5 245.3 L662.0 244.5 L662.5 245.3 L663.0 245.3 L663.5 245.3 L664.0 245.3 L664.5 245.3 L665.0 245.3 L665.5 245.4 L666.0 245.4 L666.5 245.4 L667.0 245.4 L667.5 245.4 L668.0 245.4 L668.5 245.4 L669.0 245.4 L669.5 245.4 L670.0 245.5 L670.5 245.5 L671.0 245.5 L671.5 244.7 L672.0 245.5 L672.5 245.5 L673.0 245.5 L673.5 245.5 L674.0 245.6 L674.5 245.6 L675.0 245.6 L675.5 245.6 L676.0 245.6 L676.5 245.6 L677.0 245.6 L677.5 245.6 L678.0 245.6 L678.5 245.7 L679.0 245.7 L679.5 245.7 L680.0 245.7 L680.5 245.7 L681.0 245.7 L681.5 245.7 L682.0 245.7 L682.5 246.6 L683.0 245.8 L683.5 245.8 L684.0 245.8 L684.5 245.8 L685.0 245.8 L685.5 245.8 L686.0 245.8 L686.5 245.8 L687.0 245.9 L687.5 245.9 L688.0 245.9 L688.5 245.1 L689.0 245.9 L689.5 245.9 L690.0 245.9 L690.5 246.7 L691.0 245.9 L691.5 246.0 L692.0 246.0 L692.5 246.8 L693.0 246.0 L693.5 246.0 L694.0 246.0 L694.5 245.2 L695.0 246.0 L695.5 246.1 L696.0 246.1 L696.5 246.1 L697.0 246.1 L697.5 246.1 L698.0 246.1 L698.5 246.1 L699.0 246.1 L699.5 246.1 L700.0 246.2 L700.5 246.2 L701.0 246.2 L701.5 246.2 L702.0 246.2 L702.5 246.2 L703.0 246.2 L703.5 246.2 L704.0 246.2 L704.5 246.3 L705.0 246.3 L705.5 246.3 L706.0 246.3 L706.5 246.3 L707.0 246.3 L707.5 246.3 L708.0 246.3 L708.5 246.3 L709.0 246.4 L709.5 246.4 L710.0 246.4 L710.5 246.4 L711.0 246.4 L711.5 246.4 L712.0 246.4 L712.5 246.4 L713.0 246.5 L713.5 245.7 L714.0 246.5 L714.5 246.5 L715.0 246.5 L715.5 246.6 L716.0 247.4" fill="none" stroke="#22cbd7" stroke-width="1" shape-rendering="crispEdges" />
<path d="M154.5 226.5 V239.5 M155.5 230 V238.5 M156.5 231.5 V238 M157.5 233.5 V237.5 M158.5 235 V237" fill="none" stroke="#22cbd7" stroke-width="1" shape-rendering="crispEdges" />
<path d="M716.5 229V247 M717.5 231V236 M718.5 231V238 M719.5 226V242 M720.5 232V240 M721.5 233V244 M722.5 230V235 M723.5 230V236 M724.5 231V237 M725.5 232V238 M726.5 234V249 M727.5 247V249 M728.5 247V249 M732.5 245V249" fill="none" stroke="#22cbd7" stroke-width="1" shape-rendering="crispEdges" />
<path d="M716 229.5 H718 M722 230.5 H725" fill="none" stroke="#22cbd7" stroke-width="1" shape-rendering="crispEdges" />
<path d="M728.0 247.5H785.0 V248.5H815.0 V249.5H851.0 V250.5H896.0 V251.5H944.0 V252.5H990.0 V253.5H1036.0 V254.5H1082.0 V255.5H1124.0 V256.5H1160.0 V257.5H1197.0 V258.5H1233.0 V259.5H1269.0 V260.5H1306.0 V261.5H1342.0 V262.5H1384.0 V263.5H1432.0 V264.5H1477.0 V265.5H1521.0 V266.5H1565.0 V267.5H1609.0 V268.5H1651.0 V269.5H1691.0 V270.5H1731.0 V271.5H1751.0" fill="none" stroke="#22cbd7" stroke-width="1" shape-rendering="crispEdges" />
<path d="M42 348.5 H56" fill="none" stroke="#e8314f" stroke-width="1" shape-rendering="crispEdges" />
<path d="M56 348 L56 296 L58 296.5 L59.5 298 L61 302.5 L63 315 L65 333.5 L67 345 L69 351 L71 352 L73 348.5 L69 352 L66.5 353 L65 356 L64 363 L62.5 378 L61.5 394 L60 399 L58 400.5 L56 400Z" fill="#e8314f" stroke="#e8314f" stroke-width="0.8"/>
<path d="M73.0 348.5 L128.0 348.5 L128.3 353.5 L129.5 392.5 L131.0 388.5 L133.0 393.8 L135.0 386.0 L138.5 371.0 L142.5 384.0 L147.5 370.0 L151.5 378.8 L153.5 376.0" fill="none" stroke="#e8314f" stroke-width="1.5" stroke-linejoin="round"/>
<path d="M153.5 376 L154 352 L155 350.5 L156.5 354 L159 364 L161.5 371 L163 372 L161 377 L158 377.5 L156.5 378 L155.8 390 L155.2 390 L154.8 378Z" fill="#e8314f" stroke="#e8314f" stroke-width="0.6"/>
<path d="M162.0 372.8 L162.5 371.6 L163.0 370.8 L163.5 370.0 L164.0 369.0 L164.5 368.1 L165.0 367.0 L165.5 366.0 L166.0 366.3 L166.5 366.7 L167.0 367.9 L167.5 368.4 L168.0 368.9 L168.5 369.0 L169.0 370.0 L169.5 370.5 L170.0 371.0 L170.5 370.0 L171.0 369.7 L171.5 368.8 L172.0 367.9 L172.5 367.2 L173.0 366.4 L173.5 365.7 L174.0 365.3 L174.5 365.1 L175.0 365.9 L175.5 366.3 L176.0 366.6 L176.5 366.8 L177.0 367.1 L177.5 367.3 L178.0 367.9 L178.5 368.3 L179.0 368.2 L179.5 368.0 L180.0 367.3 L180.5 367.0 L181.0 366.2 L181.5 366.0 L182.0 365.6 L182.5 365.2 L183.0 364.5 L183.5 363.9 L184.0 363.5 L184.5 363.8 L185.0 364.0 L185.5 364.6 L186.0 364.5 L186.5 365.0 L187.0 365.1 L187.5 365.8 L188.0 366.2 L188.5 365.9 L189.0 365.3 L189.5 365.1 L190.0 364.4 L190.5 364.0 L191.0 363.4 L191.5 363.4 L192.0 363.1 L192.5 362.2 L193.0 361.8 L193.5 362.5 L194.0 362.7 L194.5 362.7 L195.0 363.3 L195.5 363.3 L196.0 363.3 L196.5 363.6 L197.0 363.8 L197.5 363.9 L198.0 363.5 L198.5 363.0 L199.0 362.5 L199.5 362.2 L200.0 361.7 L200.5 361.3 L201.0 361.0 L201.5 361.2 L202.0 361.1 L202.5 361.7 L203.0 361.7 L203.5 362.0 L204.0 361.7 L204.5 362.1 L205.0 362.3 L205.5 362.4 L206.0 362.2 L206.5 362.3 L207.0 362.0 L207.5 362.0 L208.0 361.5 L208.5 361.3 L209.0 360.9 L209.5 360.7 L210.0 360.6 L210.5 360.1 L211.0 359.8 L211.5 359.7 L212.0 359.6 L212.5 359.6 L213.0 359.6 L213.5 359.4 L214.0 359.8 L214.5 359.8 L215.0 359.7 L215.5 359.8 L216.0 360.0 L216.5 359.9 L217.0 359.8 L217.5 359.7 L218.0 359.6 L218.5 360.0 L219.0 359.5 L219.5 359.8 L220.0 359.7 L220.5 359.1 L221.0 359.3 L221.5 359.0 L222.0 358.8 L222.5 358.8 L223.0 358.8 L223.5 358.7 L224.0 358.6 L224.5 358.4 L225.0 358.7 L225.5 358.3 L226.0 358.6 L226.5 358.3 L227.0 358.0 L227.5 358.5 L228.0 358.2 L228.5 358.0 L229.0 358.4 L229.5 357.9 L230.0 357.7 L230.5 357.8 L231.0 358.0 L231.5 357.6 L232.0 357.6 L232.5 358.0 L233.0 357.8 L233.5 357.7 L234.0 357.7 L234.5 357.8 L235.0 357.6 L235.5 357.5 L236.0 357.6 L236.5 357.4 L237.0 357.4 L237.5 357.1 L238.0 357.0 L238.5 356.9 L239.0 357.1 L239.5 356.9 L240.0 357.1 L240.5 357.2 L241.0 356.8 L241.5 356.9 L242.0 357.1 L242.5 356.7 L243.0 357.1 L243.5 356.9 L244.0 356.6 L244.5 357.1 L245.0 356.8 L245.5 356.9 L246.0 357.0 L246.5 357.0 L247.0 356.7 L247.5 356.5 L248.0 356.9 L248.5 357.0 L249.0 356.5 L249.5 356.5 L250.0 356.5 L250.5 356.8 L251.0 356.9 L251.5 356.4 L252.0 356.5 L252.5 356.8 L253.0 356.5 L253.5 356.4 L254.0 356.5 L254.5 356.2 L255.0 356.7 L255.5 356.6 L256.0 356.7 L256.5 357.1 L257.0 357.1 L257.5 357.6 L258.0 357.3 L258.5 358.2 L259.0 359.2 L259.5 359.7 L260.0 360.4 L260.5 361.1 L261.0 361.6 L261.5 362.3 L262.0 362.8 L262.5 363.5 L263.0 364.7 L263.5 364.7 L264.0 364.9 L264.5 364.9 L265.0 364.8 L265.5 365.0 L266.0 365.2 L266.5 365.6 L267.0 365.8 L267.5 365.9 L268.0 366.0 L268.5 365.9 L269.0 365.8 L269.5 366.4 L270.0 366.0 L270.5 366.4 L271.0 366.1 L271.5 366.3 L272.0 366.4 L272.5 366.4 L273.0 366.0 L273.5 366.3 L274.0 366.4 L274.5 366.4 L275.0 366.1 L275.5 366.5 L276.0 366.3 L276.5 366.3 L277.0 366.3 L277.5 366.1 L278.0 366.3 L278.5 366.0 L279.0 366.3 L279.5 366.2 L280.0 366.4 L280.5 366.2 L281.0 366.1 L281.5 366.3 L282.0 366.3 L282.5 366.0 L283.0 366.2 L283.5 366.0 L284.0 366.1 L284.5 366.1 L285.0 365.8 L285.5 366.3 L286.0 365.8 L286.5 365.9 L287.0 366.0 L287.5 365.8 L288.0 366.1 L288.5 365.9 L289.0 366.3 L289.5 366.0 L290.0 365.9 L290.5 366.0 L291.0 366.1 L291.5 365.8 L292.0 365.7 L292.5 365.8 L293.0 366.0 L293.5 366.0 L294.0 366.2 L294.5 365.8 L295.0 365.9 L295.5 366.1 L296.0 365.8 L296.5 365.9 L297.0 365.9 L297.5 366.0 L298.0 366.0 L298.5 366.2 L299.0 365.6 L299.5 366.1 L300.0 365.9 L300.5 366.0 L301.0 365.7 L301.5 365.9 L302.0 365.7 L302.5 365.6 L303.0 366.0 L303.5 365.9 L304.0 365.6 L304.5 365.6 L305.0 365.8 L305.5 366.0 L306.0 365.8 L306.5 365.8 L307.0 365.8 L307.5 366.0 L308.0 365.9 L308.5 365.6 L309.0 365.6 L309.5 365.8 L310.0 365.9 L310.5 365.5 L311.0 365.6 L311.5 365.8 L312.0 365.7 L312.5 365.6 L313.0 365.7 L313.5 365.7 L314.0 366.0 L314.5 365.8 L315.0 365.5 L315.5 365.6 L316.0 365.8 L316.5 365.4 L317.0 365.4 L317.5 365.8 L318.0 365.9 L318.5 365.8 L319.0 365.4 L319.5 365.6 L320.0 365.8 L320.5 365.4 L321.0 365.4 L321.5 365.6 L322.0 365.4 L322.5 365.4 L323.0 365.7 L323.5 365.5 L324.0 365.7 L324.5 365.6 L325.0 365.8 L325.5 365.4 L326.0 365.5 L326.5 365.4 L327.0 365.3 L327.5 365.4 L328.0 365.4 L328.5 365.5 L329.0 365.4 L329.5 365.8 L330.0 366.4 L330.5 365.1 L331.0 364.8 L331.5 365.5 L332.0 364.6 L332.5 364.8 L333.0 366.1 L333.5 364.7 L334.0 366.7 L334.5 364.6 L335.0 366.8 L335.5 365.4 L336.0 365.8 L336.5 365.4 L337.0 365.9 L337.5 365.4 L338.0 364.8 L338.5 364.6 L339.0 366.5 L339.5 365.7 L340.0 366.4 L340.5 364.7 L341.0 365.8 L341.5 365.9 L342.0 365.5 L342.5 365.0 L343.0 366.2 L343.5 366.3 L344.0 366.8 L344.5 364.9 L345.0 364.8 L345.5 366.2 L346.0 366.2 L346.5 365.1 L347.0 366.3 L347.5 366.8 L348.0 365.8 L348.5 365.0 L349.0 367.0 L349.5 364.8 L350.0 366.9 L350.5 365.1 L351.0 365.6 L351.5 366.5 L352.0 366.9 L352.5 365.3 L353.0 365.0 L353.5 364.9 L354.0 366.3 L354.5 366.3 L355.0 367.1 L355.5 366.1 L356.0 366.2 L356.5 366.9 L357.0 366.8 L357.5 366.0 L358.0 366.7 L358.5 366.0 L359.0 365.2 L359.5 366.7 L360.0 366.5 L360.5 367.4 L361.0 366.6 L361.5 365.4 L362.0 366.8 L362.5 366.3 L363.0 365.1 L363.5 366.0 L364.0 367.0 L364.5 366.4 L365.0 365.9 L365.5 364.8 L366.0 366.4 L366.5 367.1 L367.0 366.8 L367.5 365.2 L368.0 365.0 L368.5 365.8 L369.0 365.3 L369.5 366.0 L370.0 365.7 L370.5 366.4 L371.0 366.8 L371.5 365.4 L372.0 366.3 L372.5 366.2 L373.0 364.8 L373.5 366.3 L374.0 365.1 L374.5 365.8 L375.0 365.6 L375.5 366.0 L376.0 366.5 L376.5 366.5 L377.0 364.4 L377.5 364.4 L378.0 364.4 L378.5 366.4 L379.0 365.9 L379.5 365.7 L380.0 365.1 L380.5 364.9 L381.0 365.6 L381.5 366.4 L382.0 366.1 L382.5 365.5 L383.0 364.8 L383.5 366.3 L384.0 365.7 L384.5 365.1 L385.0 364.4 L385.5 366.3 L386.0 364.2 L386.5 366.2 L387.0 364.3 L387.5 365.8 L388.0 365.0 L388.5 365.7 L389.0 364.9 L389.5 364.4 L390.0 365.5 L390.5 364.5 L391.0 364.4 L391.5 365.2 L392.0 365.2 L392.5 365.6 L393.0 365.0 L393.5 365.7 L394.0 365.3 L394.5 363.6 L395.0 363.9 L395.5 365.5 L396.0 364.9 L396.5 365.8 L397.0 364.0 L397.5 364.3 L398.0 364.3 L398.5 365.2 L399.0 363.9 L399.5 364.4 L400.0 365.0 L400.5 364.0 L401.0 363.9 L401.5 363.6 L402.0 365.4 L402.5 365.0 L403.0 365.0 L403.5 363.8 L404.0 363.4 L404.5 365.2 L405.0 365.4 L405.5 363.3 L406.0 365.3 L406.5 364.8 L407.0 364.2 L407.5 364.7 L408.0 364.0 L408.5 364.1 L409.0 364.0 L409.5 363.9 L410.0 363.6 L410.5 364.5 L411.0 364.3 L411.5 364.9 L412.0 363.3 L412.5 362.7 L413.0 363.4 L413.5 364.2 L414.0 364.6 L414.5 363.8 L415.0 362.4 L415.5 363.3 L416.0 363.6 L416.5 363.6 L417.0 363.1 L417.5 362.4 L418.0 363.1 L418.5 363.4 L419.0 362.7 L419.5 364.1 L420.0 362.8 L420.5 363.2 L421.0 362.5 L421.5 362.5 L422.0 362.1 L422.5 363.8 L423.0 362.6 L423.5 363.2 L424.0 362.7 L424.5 363.6 L425.0 363.8 L425.5 362.3 L426.0 363.9 L426.5 362.8 L427.0 363.7 L427.5 362.5 L428.0 362.7 L428.5 361.7 L429.0 362.2 L429.5 361.5 L430.0 362.1 L430.5 362.9 L431.0 361.6 L431.5 361.8 L432.0 363.4 L432.5 362.6 L433.0 362.6 L433.5 361.7 L434.0 363.4 L434.5 361.8 L435.0 361.3 L435.5 362.2 L436.0 362.5 L436.5 362.5 L437.0 361.3 L437.5 363.0 L438.0 361.7 L438.5 363.3 L439.0 361.8 L439.5 360.9 L440.0 360.9 L440.5 361.6 L441.0 362.4 L441.5 361.8 L442.0 362.7 L442.5 362.7 L443.0 362.6 L443.5 362.1 L444.0 362.7 L444.5 362.1 L445.0 360.6 L445.5 361.1 L446.0 360.9 L446.5 360.5 L447.0 362.4 L447.5 361.4 L448.0 360.6 L448.5 362.1 L449.0 361.0 L449.5 360.6 L450.0 361.7 L450.5 360.4 L451.0 362.2 L451.5 362.1 L452.0 360.0 L452.5 361.1 L453.0 359.8 L453.5 361.9 L454.0 360.3 L454.5 360.9 L455.0 361.4 L455.5 361.4 L456.0 360.7 L456.5 359.7 L457.0 360.2 L457.5 359.4 L458.0 359.8 L458.5 361.1 L459.0 360.7 L459.5 360.3 L460.0 360.7 L460.5 360.3 L461.0 360.0 L461.5 360.0 L462.0 359.9 L462.5 359.9 L463.0 360.0 L463.5 360.8 L464.0 361.0 L464.5 361.0 L465.0 359.9 L465.5 360.9 L466.0 360.6 L466.5 359.0 L467.0 360.6 L467.5 358.8 L468.0 360.0 L468.5 359.4 L469.0 360.2 L469.5 360.3 L470.0 360.7 L470.5 360.5 L471.0 359.2 L471.5 358.3 L472.0 358.4 L472.5 360.5 L473.0 358.9 L473.5 358.6 L474.0 358.3 L474.5 358.9 L475.0 358.8 L475.5 359.7 L476.0 358.3 L476.5 358.9 L477.0 359.9 L477.5 358.8 L478.0 358.1 L478.5 358.7 L479.0 358.2 L479.5 357.7 L480.0 359.0 L480.5 358.0 L481.0 359.8 L481.5 357.8 L482.0 357.2 L482.5 358.4 L483.0 358.4 L483.5 357.2 L484.0 358.5 L484.5 358.9 L485.0 359.4 L485.5 359.8 L486.0 358.5 L486.5 359.4 L487.0 356.8 L487.5 359.1 L488.0 359.8 L488.5 357.8 L489.0 357.2 L489.5 357.0 L490.0 357.0 L490.5 357.5 L491.0 357.6 L491.5 356.6 L492.0 359.0 L492.5 359.5 L493.0 356.4 L493.5 358.2 L494.0 357.4 L494.5 357.6 L495.0 357.6 L495.5 357.3 L496.0 358.5 L496.5 359.0 L497.0 356.6 L497.5 356.8 L498.0 355.6 L498.5 356.9 L499.0 356.4 L499.5 356.0 L500.0 358.4 L500.5 357.2 L501.0 356.1 L501.5 355.8 L502.0 357.3 L502.5 358.1 L503.0 358.3 L503.5 357.7 L504.0 357.7 L504.5 355.6 L505.0 355.4 L505.5 357.3 L506.0 357.1 L506.5 355.5 L507.0 355.9 L507.5 354.8 L508.0 357.2 L508.5 356.5 L509.0 357.6 L509.5 357.9 L510.0 356.4 L510.5 355.7 L511.0 355.4 L511.5 356.7 L512.0 357.8 L512.5 354.6 L513.0 355.7 L513.5 357.0 L514.0 354.7 L514.5 356.5 L515.0 355.0 L515.5 356.1 L516.0 357.6 L516.5 354.1 L517.0 356.5 L517.5 356.0 L518.0 357.0 L518.5 355.1 L519.0 357.1 L519.5 357.2 L520.0 354.0 L520.5 354.9 L521.0 354.5 L521.5 356.6 L522.0 356.8 L522.5 356.3 L523.0 356.6 L523.5 355.5 L524.0 356.6 L524.5 354.4 L525.0 353.7 L525.5 355.9 L526.0 354.8 L526.5 353.2 L527.0 356.0 L527.5 353.5 L528.0 353.9 L528.5 353.3 L529.0 355.1 L529.5 353.5 L530.0 353.9 L530.5 354.8 L531.0 356.2 L531.5 352.8 L532.0 356.0 L532.5 355.3 L533.0 353.5 L533.5 355.5 L534.0 354.8 L534.5 354.1 L535.0 353.2 L535.5 353.9 L536.0 353.6 L536.5 352.6 L537.0 352.9 L537.5 353.2 L538.0 353.8 L538.5 354.2 L539.0 354.8 L539.5 352.4 L540.0 352.4 L540.5 355.1 L541.0 353.8 L541.5 352.6 L542.0 352.6 L542.5 354.1 L543.0 353.4 L543.5 353.1 L544.0 355.0 L544.5 351.6 L545.0 353.8 L545.5 354.0 L546.0 353.6 L546.5 353.6 L547.0 351.5 L547.5 354.8 L548.0 351.4 L548.5 352.5 L549.0 352.6 L549.5 354.1 L550.0 353.7 L550.5 354.1 L551.0 353.0 L551.5 354.5 L552.0 352.1 L552.5 352.3 L553.0 352.8 L553.5 351.9 L554.0 351.3 L554.5 353.1 L555.0 351.9 L555.5 353.7 L556.0 352.9 L556.5 350.5 L557.0 350.9 L557.5 351.1 L558.0 351.5 L558.5 351.1 L559.0 352.7 L559.5 351.1 L560.0 351.7 L560.5 351.5 L561.0 353.6 L561.5 351.6 L562.0 350.0 L562.5 353.3 L563.0 353.2 L563.5 349.8 L564.0 352.7 L564.5 351.7 L565.0 352.7 L565.5 351.6 L566.0 351.5 L566.5 352.0 L567.0 349.2 L567.5 349.3 L568.0 349.3 L568.5 348.9 L569.0 349.6 L569.5 348.8 L570.0 349.0 L570.5 349.7 L571.0 349.0 L571.5 348.5 L572.0 351.7 L572.5 351.5 L573.0 351.3 L573.5 348.3 L574.0 350.0 L574.5 351.2 L575.0 349.3 L575.5 349.5 L576.0 350.8 L576.5 350.8 L577.0 349.5 L577.5 348.3 L578.0 349.9 L578.5 349.9 L579.0 348.1 L579.5 348.7 L580.0 349.5 L580.5 347.5 L581.0 347.9 L581.5 348.3 L582.0 347.4 L582.5 349.1 L583.0 346.8 L583.5 347.2 L584.0 348.2 L584.5 345.1 L585.0 346.0 L585.5 345.3 L586.0 346.4 L586.5 347.7 L587.0 345.4 L587.5 347.1 L588.0 344.1 L588.5 346.8 L589.0 344.3 L589.5 344.1 L590.0 343.7 L590.5 345.8 L591.0 343.5 L591.5 342.9 L592.0 342.7 L592.5 344.6 L593.0 344.8 L593.5 343.9 L594.0 345.0 L594.5 344.4 L595.0 345.6 L595.5 343.8 L596.0 345.3 L596.5 344.4 L597.0 346.1 L597.5 345.0 L598.0 345.9 L598.5 344.0 L599.0 344.9 L599.5 343.0 L600.0 342.6 L600.5 344.9 L601.0 343.0 L601.5 346.1 L602.0 341.9 L602.5 346.2 L603.0 346.5 L603.5 346.9 L604.0 342.9 L604.5 344.9 L605.0 344.9 L605.5 345.3 L606.0 343.6 L606.5 341.9 L607.0 343.6 L607.5 344.3 L608.0 341.9 L608.5 343.5 L609.0 346.8 L609.5 342.1 L610.0 346.0 L610.5 342.8 L611.0 344.7 L611.5 341.8 L612.0 345.9 L612.5 345.0 L613.0 342.7 L613.5 343.1 L614.0 343.1 L614.5 344.0 L615.0 344.4 L615.5 344.7 L616.0 341.1 L616.5 345.2 L617.0 346.6 L617.5 343.1 L618.0 342.7 L618.5 344.0 L619.0 345.5 L619.5 343.4 L620.0 343.1 L620.5 341.9 L621.0 344.9 L621.5 341.9 L622.0 345.1 L622.5 342.8 L623.0 340.4 L623.5 340.6 L624.0 343.9 L624.5 343.1 L625.0 343.2 L625.5 337.7 L626.0 338.6 L626.5 342.3 L627.0 339.1 L627.5 340.5 L628.0 339.4 L628.5 341.2 L629.0 340.3 L629.5 342.6 L630.0 342.1 L630.5 340.6 L631.0 340.9 L631.5 338.6 L632.0 342.3 L632.5 341.1 L633.0 338.8 L633.5 339.2 L634.0 340.2 L634.5 341.3 L635.0 341.9 L635.5 342.9 L636.0 344.5 L636.5 340.3 L637.0 340.6 L637.5 342.0 L638.0 342.0 L638.5 344.2 L639.0 345.0 L639.5 343.4 L640.0 344.1 L640.5 344.5 L641.0 341.0 L641.5 342.7 L642.0 342.9 L642.5 341.4 L643.0 342.8 L643.5 342.2 L644.0 345.1 L644.5 343.2 L645.0 343.6 L645.5 347.1 L646.0 344.8 L646.5 347.6 L647.0 345.8 L647.5 345.4 L648.0 347.2 L648.5 343.9 L649.0 347.9 L649.5 345.4 L650.0 343.5 L650.5 346.5 L651.0 344.1 L651.5 346.8 L652.0 347.3 L652.5 348.0 L653.0 348.0 L653.5 344.3 L654.0 344.4 L654.5 348.5 L655.0 347.8 L655.5 349.5 L656.0 346.2 L656.5 344.1 L657.0 343.3 L657.5 343.0 L658.0 343.4 L658.5 346.4 L659.0 344.9 L659.5 346.2 L660.0 346.0 L660.5 343.8 L661.0 341.7 L661.5 342.0 L662.0 344.2 L662.5 341.6 L663.0 343.7 L663.5 343.6 L664.0 340.9 L664.5 341.1 L665.0 345.9 L665.5 343.4 L666.0 343.2 L666.5 343.0 L667.0 345.0 L667.5 344.1 L668.0 344.3 L668.5 343.7 L669.0 341.2 L669.5 341.7 L670.0 341.9 L670.5 340.5 L671.0 343.8 L671.5 345.0 L672.0 345.5 L672.5 340.5 L673.0 341.2 L673.5 343.6 L674.0 340.2 L674.5 341.3 L675.0 342.2 L675.5 344.3 L676.0 340.2 L676.5 340.2 L677.0 341.2 L677.5 341.1 L678.0 340.7 L678.5 343.1 L679.0 340.7 L679.5 339.8 L680.0 344.6 L680.5 342.2 L681.0 341.9 L681.5 340.8 L682.0 344.3 L682.5 344.7 L683.0 339.5 L683.5 342.8 L684.0 342.7 L684.5 342.1 L685.0 341.1 L685.5 340.9 L686.0 342.6 L686.5 338.6 L687.0 343.2 L687.5 338.8 L688.0 339.2 L688.5 340.2 L689.0 338.1 L689.5 342.9 L690.0 340.0 L690.5 339.8 L691.0 339.5 L691.5 342.4 L692.0 339.3 L692.5 341.0 L693.0 342.6 L693.5 339.5 L694.0 342.2 L694.5 340.1 L695.0 339.1 L695.5 339.4 L696.0 338.6 L696.5 339.0 L697.0 338.1 L697.5 336.6 L698.0 340.8 L698.5 337.6 L699.0 336.9 L699.5 337.1 L700.0 339.2 L700.5 341.5 L701.0 339.0 L701.5 337.9 L702.0 341.0 L702.5 335.3 L703.0 336.4 L703.5 334.7 L704.0 336.4 L704.5 338.5 L705.0 337.8 L705.5 334.8 L706.0 336.4 L706.5 333.6 L707.0 339.9 L707.5 337.9 L708.0 340.4 L708.5 340.6 L709.0 336.1 L709.5 334.1 L710.0 339.2 L710.5 334.2 L711.0 332.5 L711.5 333.1 L712.0 328.8 L712.5 334.6 L713.0 333.5 L713.5 327.2 L714.0 334.4 L714.5 332.8 L715.0 332.6" fill="none" stroke="#e8314f" stroke-width="1" shape-rendering="crispEdges" />
<path d="M715 331 L716.5 320 L717 295.5 L718.5 296 L720 297 L722 294.5 L724.5 293 L727 297.5 L728.5 305 L730 312.5 L731 313.5 L731.8 295 L732.5 294.3 L734.5 294 L736 302 L738 312.5 L739.5 316 L741 318 L739 319.5 L737 320.5 L735.5 327 L734.8 343.5 L732.8 343.7 L732.2 322 L731 320 L730 320.5 L728.5 324 L727.5 328 L726.5 344 L725.5 365 L724.6 383 L723.8 392 L722.6 391 L721.8 372 L720.8 362 L720 346 L719 344 L718.2 355 L717.4 355 L716.8 338 L715.5 336Z" fill="#e8314f" stroke="#e8314f" stroke-width="0.8"/>
<path d="M740.0 317.8 L740.5 318.5 L741.0 317.2 L741.5 316.7 L742.0 317.4 L742.5 317.0 L743.0 316.7 L743.5 315.6 L744.0 315.1 L744.5 316.7 L745.0 315.9 L745.5 317.7 L746.0 318.0 L746.5 318.4 L747.0 318.1 L747.5 319.4 L748.0 318.9 L748.5 319.7 L749.0 320.3 L749.5 319.6 L750.0 319.4 L750.5 320.0 L751.0 319.3 L751.5 319.4 L752.0 319.2 L752.5 319.4 L753.0 319.4 L753.5 318.7 L754.0 319.3 L754.5 320.4 L755.0 320.6 L755.5 321.3 L756.0 320.4 L756.5 321.8 L757.0 321.8 L757.5 323.0 L758.0 322.1 L758.5 322.8 L759.0 321.5 L759.5 321.8 L760.0 321.7 L760.5 322.2 L761.0 321.6 L761.5 322.2 L762.0 321.8 L762.5 322.3 L763.0 322.3 L763.5 323.0 L764.0 322.3 L764.5 323.4 L765.0 323.4 L765.5 323.7 L766.0 324.4 L766.5 324.1 L767.0 323.6 L767.5 324.1 L768.0 324.1 L768.5 324.8 L769.0 324.4 L769.5 324.3 L770.0 324.9 L770.5 323.7 L771.0 324.7 L771.5 324.5 L772.0 324.9 L772.5 324.9 L773.0 324.5 L773.5 325.1 L774.0 325.8 L774.5 325.8 L775.0 325.2 L775.5 326.0 L776.0 327.0 L776.5 326.4 L777.0 327.2 L777.5 326.4 L778.0 326.9 L778.5 327.3 L779.0 326.7 L779.5 326.1 L780.0 326.6 L780.5 326.3 L781.0 327.2 L781.5 326.6 L782.0 326.6 L782.5 327.1 L783.0 327.5 L783.5 327.9 L784.0 327.8 L784.5 327.8 L785.0 328.3 L785.5 327.7 L786.0 328.5 L786.5 328.8 L787.0 328.8 L787.5 328.5 L788.0 328.1 L788.5 329.4 L789.0 329.3 L789.5 329.0 L790.0 328.5 L790.5 328.6 L791.0 329.6 L791.5 328.9 L792.0 329.0 L792.5 330.2 L793.0 329.1 L793.5 329.5 L794.0 329.2 L794.5 330.1 L795.0 329.5 L795.5 330.3 L796.0 330.1 L796.5 330.2 L797.0 330.6 L797.5 329.6 L798.0 330.7 L798.5 329.9 L799.0 330.7 L799.5 330.9 L800.0 330.1 L800.5 331.0 L801.0 330.9 L801.5 330.4 L802.0 331.1 L802.5 330.4 L803.0 330.9 L803.5 331.7 L804.0 331.4 L804.5 330.7 L805.0 332.0 L805.5 331.8 L806.0 331.3 L806.5 331.0 L807.0 331.8 L807.5 330.9 L808.0 331.7 L808.5 331.1 L809.0 332.4 L809.5 331.6 L810.0 331.4 L810.5 331.8 L811.0 332.8 L811.5 331.7 L812.0 332.2 L812.5 332.4 L813.0 332.1 L813.5 332.6 L814.0 331.9 L814.5 332.6 L815.0 333.4 L815.5 332.7 L816.0 333.2 L816.5 332.6 L817.0 333.3 L817.5 332.7 L818.0 333.3 L818.5 333.9 L819.0 333.2 L819.5 333.8 L820.0 333.1 L820.5 333.2 L821.0 332.9 L821.5 333.2 L822.0 333.8 L822.5 334.0 L823.0 334.0 L823.5 334.0 L824.0 333.1 L824.5 334.2 L825.0 333.2 L825.5 333.8 L826.0 333.4 L826.5 333.8 L827.0 334.7 L827.5 334.1 L828.0 334.7 L828.5 334.5 L829.0 333.6 L829.5 334.6 L830.0 334.0 L830.5 334.5 L831.0 334.2 L831.5 334.7 L832.0 334.3 L832.5 334.2 L833.0 334.1 L833.5 335.3 L834.0 335.2 L834.5 334.4 L835.0 334.1 L835.5 334.2 L836.0 335.3 L836.5 335.6 L837.0 335.7 L837.5 334.9 L838.0 334.4 L838.5 334.7 L839.0 335.0 L839.5 335.5 L840.0 336.0 L840.5 335.4 L841.0 335.5 L841.5 334.8 L842.0 335.0 L842.5 334.9 L843.0 335.7 L843.5 335.4 L844.0 336.3 L844.5 336.1 L845.0 335.6 L845.5 335.3 L846.0 335.6 L846.5 335.1 L847.0 336.0 L847.5 336.4 L848.0 335.9 L848.5 335.4 L849.0 335.4 L849.5 335.4 L850.0 336.4 L850.5 336.7 L851.0 335.5 L851.5 335.5 L852.0 336.9 L852.5 335.8 L853.0 336.7 L853.5 336.2 L854.0 335.7 L854.5 336.9 L855.0 336.8 L855.5 336.6 L856.0 336.5 L856.5 336.7 L857.0 336.7 L857.5 336.6 L858.0 336.8 L858.5 337.0 L859.0 336.3 L859.5 336.7 L860.0 337.1 L860.5 336.3 L861.0 337.4 L861.5 337.3 L862.0 336.7 L862.5 337.2 L863.0 337.1 L863.5 336.9 L864.0 336.9 L864.5 337.3 L865.0 336.6 L865.5 337.7 L866.0 337.2 L866.5 337.4 L867.0 337.7 L867.5 336.8 L868.0 337.6 L868.5 337.5 L869.0 336.8 L869.5 337.4 L870.0 337.4 L870.5 338.0 L871.0 337.2 L871.5 337.0 L872.0 337.3 L872.5 337.1 L873.0 337.0 L873.5 338.2 L874.0 337.0 L874.5 337.9 L875.0 337.1 L875.5 338.1 L876.0 337.8 L876.5 337.1 L877.0 337.9 L877.5 338.0 L878.0 337.3 L878.5 337.6 L879.0 337.8 L879.5 338.0 L880.0 338.1 L880.5 338.4 L881.0 337.9 L881.5 338.3 L882.0 338.1 L882.5 338.3 L883.0 337.3 L883.5 337.9 L884.0 337.9 L884.5 338.4 L885.0 338.6 L885.5 338.1 L886.0 338.7 L886.5 338.0 L887.0 338.0 L887.5 338.3 L888.0 338.1 L888.5 338.8 L889.0 337.6 L889.5 338.1 L890.0 337.5 L890.5 338.0 L891.0 338.3 L891.5 338.0 L892.0 337.5 L892.5 337.5 L893.0 338.5 L893.5 338.9 L894.0 338.2 L894.5 337.7 L895.0 337.8 L895.5 338.9 L896.0 337.7 L896.5 339.1 L897.0 337.9 L897.5 337.8 L898.0 338.8 L898.5 338.2 L899.0 338.3 L899.5 339.0 L900.0 339.0 L900.5 338.9 L901.0 337.8 L901.5 338.2 L902.0 338.2 L902.5 338.6 L903.0 338.6 L903.5 338.4 L904.0 338.6 L904.5 339.1 L905.0 338.4 L905.5 338.4 L906.0 338.4 L906.5 338.8 L907.0 338.0 L907.5 339.3 L908.0 338.3 L908.5 338.5 L909.0 339.0 L909.5 338.0 L910.0 339.5 L910.5 338.7 L911.0 339.2 L911.5 338.8 L912.0 338.2 L912.5 338.5 L913.0 338.3 L913.5 339.5 L914.0 339.4 L914.5 339.1 L915.0 339.4 L915.5 339.0 L916.0 338.5 L916.5 339.7 L917.0 339.3 L917.5 338.6 L918.0 338.9 L918.5 338.2 L919.0 339.7 L919.5 339.0 L920.0 339.0 L920.5 338.3 L921.0 339.5 L921.5 338.4 L922.0 339.2 L922.5 339.3 L923.0 339.2 L923.5 339.6 L924.0 339.8 L924.5 339.4 L925.0 339.0 L925.5 338.7 L926.0 339.8 L926.5 339.2 L927.0 339.0 L927.5 339.2 L928.0 338.9 L928.5 338.7 L929.0 339.4 L929.5 338.8 L930.0 339.7 L930.5 339.6 L931.0 339.0 L931.5 339.3 L932.0 340.0 L932.5 339.1 L933.0 339.1 L933.5 339.4 L934.0 339.0 L934.5 339.0 L935.0 340.0 L935.5 339.6 L936.0 339.7 L936.5 339.8 L937.0 339.0 L937.5 339.4 L938.0 338.9 L938.5 340.3 L939.0 339.4 L939.5 339.7 L940.0 339.8 L940.5 339.1 L941.0 340.0 L941.5 340.3 L942.0 340.3 L942.5 339.1 L943.0 339.3 L943.5 339.7 L944.0 339.9 L944.5 339.2 L945.0 340.3 L945.5 340.3 L946.0 339.5 L946.5 340.3 L947.0 339.4 L947.5 339.3 L948.0 340.7 L948.5 339.7 L949.0 339.8 L949.5 340.5 L950.0 339.7 L950.5 340.6 L951.0 340.4 L951.5 339.8 L952.0 340.4 L952.5 340.4 L953.0 340.7 L953.5 340.6 L954.0 340.2 L954.5 340.8 L955.0 340.7 L955.5 341.0 L956.0 339.7 L956.5 339.8 L957.0 340.9 L957.5 340.6 L958.0 340.2 L958.5 340.2 L959.0 340.8 L959.5 341.1 L960.0 340.6 L960.5 339.9 L961.0 340.8 L961.5 340.1 L962.0 340.6 L962.5 340.8 L963.0 341.2 L963.5 339.9 L964.0 340.1 L964.5 341.2 L965.0 340.8 L965.5 340.4 L966.0 340.4 L966.5 340.6 L967.0 341.4 L967.5 341.0 L968.0 341.1 L968.5 341.4 L969.0 341.3 L969.5 340.5 L970.0 340.3 L970.5 341.4 L971.0 340.9 L971.5 341.3 L972.0 341.1 L972.5 340.5 L973.0 340.2 L973.5 340.3 L974.0 340.9 L974.5 341.6 L975.0 340.7 L975.5 341.0 L976.0 340.5 L976.5 340.7 L977.0 340.4 L977.5 340.6 L978.0 340.5 L978.5 340.5 L979.0 341.6 L979.5 341.3 L980.0 341.5 L980.5 340.5 L981.0 340.9 L981.5 341.5 L982.0 340.6 L982.5 341.0 L983.0 340.6 L983.5 341.1 L984.0 341.9 L984.5 340.7 L985.0 341.4 L985.5 341.6 L986.0 341.9 L986.5 341.0 L987.0 342.0 L987.5 342.0 L988.0 340.9 L988.5 341.7 L989.0 342.0 L989.5 342.3 L990.0 341.5 L990.5 342.3 L991.0 342.2 L991.5 341.0 L992.0 341.4 L992.5 341.9 L993.0 341.4 L993.5 341.6 L994.0 342.1 L994.5 342.3 L995.0 341.3 L995.5 341.1 L996.0 341.4 L996.5 341.9 L997.0 342.4 L997.5 341.7 L998.0 341.7 L998.5 341.7 L999.0 342.2 L999.5 342.5 L1000.0 341.5 L1000.5 342.7 L1001.0 342.2 L1001.5 341.7 L1002.0 342.3 L1002.5 342.6 L1003.0 342.1 L1003.5 341.4 L1004.0 342.4 L1004.5 342.4 L1005.0 342.3 L1005.5 342.5 L1006.0 342.3 L1006.5 342.1 L1007.0 342.3 L1007.5 342.0 L1008.0 341.9 L1008.5 342.4 L1009.0 341.8 L1009.5 342.8 L1010.0 343.1 L1010.5 341.9 L1011.0 342.6 L1011.5 342.3 L1012.0 343.2 L1012.5 343.2 L1013.0 342.7 L1013.5 342.0 L1014.0 342.6 L1014.5 342.1 L1015.0 343.0 L1015.5 342.3 L1016.0 342.8 L1016.5 343.0 L1017.0 343.3 L1017.5 343.3 L1018.0 343.3 L1018.5 343.2 L1019.0 342.8 L1019.5 342.6 L1020.0 343.1 L1020.5 342.7 L1021.0 343.4 L1021.5 342.4 L1022.0 343.5 L1022.5 343.5 L1023.0 342.8 L1023.5 342.5 L1024.0 343.4 L1024.5 342.3 L1025.0 343.2 L1025.5 342.3 L1026.0 343.5 L1026.5 343.7 L1027.0 343.3 L1027.5 342.9 L1028.0 342.7 L1028.5 343.0 L1029.0 343.8 L1029.5 343.0 L1030.0 343.4 L1030.5 343.8 L1031.0 342.5 L1031.5 342.5 L1032.0 343.6 L1032.5 342.9 L1033.0 343.1 L1033.5 343.1 L1034.0 343.2 L1034.5 343.0 L1035.0 344.0 L1035.5 343.4 L1036.0 344.2 L1036.5 343.9 L1037.0 343.4 L1037.5 344.2 L1038.0 343.9 L1038.5 344.2 L1039.0 343.0 L1039.5 343.3 L1040.0 343.0 L1040.5 342.9 L1041.0 344.2 L1041.5 343.3 L1042.0 343.4 L1042.5 343.9 L1043.0 344.4 L1043.5 343.3 L1044.0 343.1 L1044.5 344.2 L1045.0 344.3 L1045.5 344.2 L1046.0 343.2 L1046.5 344.3 L1047.0 343.8 L1047.5 343.8 L1048.0 343.4 L1048.5 344.6 L1049.0 344.2 L1049.5 344.4 L1050.0 343.5 L1050.5 344.6 L1051.0 343.5 L1051.5 343.7 L1052.0 344.1 L1052.5 343.8 L1053.0 344.5 L1053.5 344.0 L1054.0 344.0 L1054.5 344.0 L1055.0 344.3 L1055.5 344.4 L1056.0 344.0 L1056.5 343.9 L1057.0 344.8 L1057.5 344.3 L1058.0 343.8 L1058.5 344.4 L1059.0 343.5 L1059.5 343.7 L1060.0 344.4 L1060.5 344.4 L1061.0 344.6 L1061.5 344.7 L1062.0 343.6 L1062.5 344.9 L1063.0 343.7 L1063.5 343.8 L1064.0 345.1 L1064.5 345.1 L1065.0 344.4 L1065.5 343.7 L1066.0 344.0 L1066.5 344.5 L1067.0 344.7 L1067.5 344.5 L1068.0 345.2 L1068.5 344.5 L1069.0 345.0 L1069.5 345.2 L1070.0 343.9 L1070.5 345.3 L1071.0 345.1 L1071.5 345.3 L1072.0 344.2 L1072.5 344.0 L1073.0 344.9 L1073.5 343.9 L1074.0 344.3 L1074.5 345.4 L1075.0 344.2 L1075.5 344.0 L1076.0 345.1 L1076.5 345.4 L1077.0 344.4 L1077.5 344.5 L1078.0 344.1 L1078.5 344.7 L1079.0 344.5 L1079.5 344.6 L1080.0 344.7 L1080.5 345.6 L1081.0 345.2 L1081.5 344.5 L1082.0 344.8 L1082.5 344.9 L1083.0 344.7 L1083.5 344.4 L1084.0 345.3 L1084.5 345.5 L1085.0 345.4 L1085.5 345.6 L1086.0 345.2 L1086.5 344.6 L1087.0 345.0 L1087.5 345.8 L1088.0 345.3 L1088.5 345.4 L1089.0 345.8 L1089.5 345.6 L1090.0 345.3 L1090.5 344.5 L1091.0 345.3 L1091.5 344.4 L1092.0 345.5 L1092.5 345.0 L1093.0 345.3 L1093.5 345.5 L1094.0 345.1 L1094.5 345.5 L1095.0 345.2 L1095.5 345.4 L1096.0 345.2 L1096.5 345.5 L1097.0 345.2 L1097.5 345.1 L1098.0 345.4 L1098.5 345.1 L1099.0 345.8 L1099.5 345.8 L1100.0 345.7 L1100.5 345.2 L1101.0 345.0 L1101.5 345.9 L1102.0 345.2 L1102.5 345.6 L1103.0 345.8 L1103.5 345.0 L1104.0 345.8 L1104.5 345.7 L1105.0 345.9 L1105.5 345.8 L1106.0 345.3 L1106.5 345.9 L1107.0 345.9 L1107.5 345.4 L1108.0 345.7 L1108.5 345.7 L1109.0 346.1 L1109.5 345.2 L1110.0 345.9 L1110.5 345.5 L1111.0 345.4 L1111.5 345.3 L1112.0 345.6 L1112.5 345.9 L1113.0 345.4 L1113.5 345.9 L1114.0 345.4 L1114.5 346.2 L1115.0 346.1 L1115.5 345.9 L1116.0 346.2 L1116.5 345.6 L1117.0 345.7 L1117.5 346.2 L1118.0 345.8 L1118.5 345.8 L1119.0 346.1 L1119.5 345.8 L1120.0 345.8 L1120.5 346.1 L1121.0 346.0 L1121.5 345.8 L1122.0 346.1 L1122.5 345.8 L1123.0 345.8 L1123.5 346.0 L1124.0 345.6 L1124.5 346.2 L1125.0 346.3 L1125.5 345.7 L1126.0 346.1 L1126.5 345.6 L1127.0 345.7 L1127.5 346.1 L1128.0 346.3 L1128.5 346.3 L1129.0 346.2 L1129.5 346.5 L1130.0 345.9 L1130.5 346.3 L1131.0 345.7 L1131.5 346.0 L1132.0 346.3 L1132.5 346.1 L1133.0 346.3 L1133.5 346.7 L1134.0 346.0 L1134.5 346.1 L1135.0 346.3 L1135.5 346.4 L1136.0 346.3 L1136.5 345.9 L1137.0 346.0 L1137.5 346.8 L1138.0 346.2 L1138.5 346.7 L1139.0 346.8 L1139.5 346.7 L1140.0 346.3 L1140.5 346.0 L1141.0 346.7 L1141.5 347.0 L1142.0 346.4 L1142.5 346.6 L1143.0 346.3 L1143.5 346.3 L1144.0 346.9 L1144.5 346.2 L1145.0 346.7 L1145.5 347.1 L1146.0 347.0 L1146.5 346.7 L1147.0 346.2 L1147.5 346.4 L1148.0 347.0 L1148.5 346.3 L1149.0 346.6 L1149.5 346.6 L1150.0 346.6 L1150.5 347.2 L1151.0 346.9 L1151.5 347.1 L1152.0 346.4 L1152.5 346.9 L1153.0 347.2 L1153.5 347.0 L1154.0 346.8 L1154.5 347.3 L1155.0 346.5 L1155.5 346.4 L1156.0 346.8 L1156.5 346.5 L1157.0 347.2 L1157.5 346.4 L1158.0 346.7 L1158.5 346.7 L1159.0 347.0 L1159.5 347.4 L1160.0 346.8 L1160.5 346.8 L1161.0 346.9 L1161.5 347.0 L1162.0 346.6 L1162.5 347.4 L1163.0 347.1 L1163.5 346.6 L1164.0 347.0 L1164.5 347.4 L1165.0 346.8 L1165.5 347.0 L1166.0 347.4 L1166.5 346.8 L1167.0 346.9 L1167.5 347.5 L1168.0 347.2 L1168.5 347.4 L1169.0 347.5 L1169.5 346.8 L1170.0 347.0 L1170.5 346.7 L1171.0 347.3 L1171.5 347.0 L1172.0 346.8 L1172.5 347.6 L1173.0 346.8 L1173.5 347.2 L1174.0 347.2 L1174.5 346.8 L1175.0 347.1 L1175.5 347.4 L1176.0 347.0 L1176.5 347.1 L1177.0 347.6 L1177.5 347.4 L1178.0 347.0 L1178.5 347.0 L1179.0 347.1 L1179.5 347.2 L1180.0 347.3 L1180.5 347.1 L1181.0 346.9 L1181.5 347.0 L1182.0 347.4 L1182.5 347.7 L1183.0 347.4 L1183.5 347.5 L1184.0 346.9 L1184.5 347.7 L1185.0 347.2 L1185.5 347.3 L1186.0 347.5 L1186.5 347.5 L1187.0 347.6 L1187.5 346.9 L1188.0 346.9 L1188.5 347.8 L1189.0 347.7 L1189.5 346.9 L1190.0 347.1 L1190.5 347.3 L1191.0 347.1 L1191.5 347.1 L1192.0 347.9 L1192.5 347.5 L1193.0 347.3 L1193.5 347.6 L1194.0 347.1 L1194.5 347.1 L1195.0 347.1 L1195.5 347.8 L1196.0 347.1 L1196.5 347.1 L1197.0 347.8 L1197.5 347.8 L1198.0 347.5 L1198.5 347.0 L1199.0 347.7 L1199.5 347.7 L1200.0 347.2 L1200.5 347.2 L1201.0 347.7 L1201.5 347.8 L1202.0 347.8 L1202.5 347.5 L1203.0 347.2 L1203.5 347.8 L1204.0 347.7 L1204.5 347.5 L1205.0 347.5 L1205.5 347.2 L1206.0 347.1 L1206.5 347.1 L1207.0 347.3 L1207.5 347.9 L1208.0 347.7 L1208.5 347.5 L1209.0 347.5 L1209.5 347.9 L1210.0 348.0 L1210.5 347.2 L1211.0 347.2 L1211.5 347.5 L1212.0 347.8 L1212.5 347.9 L1213.0 347.9 L1213.5 347.8 L1214.0 347.8 L1214.5 347.4 L1215.0 347.3 L1215.5 347.6 L1216.0 347.3 L1216.5 348.0 L1217.0 347.7 L1217.5 347.3 L1218.0 348.1 L1218.5 347.4 L1219.0 347.2 L1219.5 347.4 L1220.0 347.7 L1220.5 347.8 L1221.0 347.3 L1221.5 347.2 L1222.0 347.3 L1222.5 347.4 L1223.0 347.5 L1223.5 347.1 L1224.0 347.5 L1224.5 347.8 L1225.0 347.3 L1225.5 347.8 L1226.0 347.6 L1226.5 347.2 L1227.0 347.6 L1227.5 347.1 L1228.0 347.9 L1228.5 348.0 L1229.0 348.0 L1229.5 347.3 L1230.0 347.4 L1230.5 347.4 L1231.0 347.7 L1231.5 347.9 L1232.0 347.4 L1232.5 347.6 L1233.0 347.9 L1233.5 347.9 L1234.0 348.1 L1234.5 347.7 L1235.0 347.5 L1235.5 347.7 L1236.0 347.3 L1236.5 347.2 L1237.0 347.4 L1237.5 347.3 L1238.0 347.5 L1238.5 347.4 L1239.0 347.5 L1239.5 347.7 L1240.0 347.5 L1240.5 347.6 L1241.0 347.3 L1241.5 348.0 L1242.0 348.0 L1242.5 347.9 L1243.0 347.7 L1243.5 348.0 L1244.0 347.3 L1244.5 347.4 L1245.0 347.6 L1245.5 347.2 L1246.0 347.3 L1246.5 347.8 L1247.0 347.6 L1247.5 347.9 L1248.0 347.6 L1248.5 348.1 L1249.0 347.3 L1249.5 348.0 L1250.0 347.7" fill="none" stroke="#e8314f" stroke-width="1" shape-rendering="crispEdges" />
<path d="M1250.0 347.5H1307.0 V348.5H1751.0" fill="none" stroke="#e8314f" stroke-width="1" shape-rendering="crispEdges" />
<path d="M3.0 476.5H260.0 V475.5H261.0 V474.5H262.0 V473.5H263.0 V472.5H264.0 V471.5H265.0 V470.5H267.0 V469.5H268.0 V468.5H269.0 V467.5H270.0 V466.5H271.0 V465.5H272.0 V464.5H273.0 V463.5H275.0 V462.5H276.0 V461.5H277.0 V460.5H279.0 V459.5H281.0 V458.5H283.0 V457.5H285.0 V456.5H289.0 V455.5H452.0 V454.5H704.0 V455.5H722.0 V456.5H726.0 V457.5H730.0 V458.5H734.0 V459.5H737.0 V460.5H740.0 V461.5H744.0 V462.5H747.0 V463.5H751.0 V464.5H755.0 V465.5H760.0 V466.5H765.0 V467.5H770.0 V468.5H776.0 V469.5H782.0 V470.5H789.0 V471.5H797.0 V472.5H807.0 V473.5H820.0 V474.5H840.0 V475.5H888.0 V476.5H1751.0" fill="none" stroke="#8cc63f" stroke-width="1" shape-rendering="crispEdges" />
<path d="M42 582.5 H1751 M886 582.5 v-1.5 M497 582.5 v-1.5 M1507 582.5 v-1.5 M334 582.5 v-1.5 M829 582.5 v-1.5 M160 582.5 v-1.5 M1470 582.5 v-1.5 M1133 582.5 v-1.5 M771 582.5 v-1.5 M455 582.5 v-1.5 M685 582.5 v-1.5 M342 582.5 v-1.5 M368 582.5 v-1.5 M638 582.5 v-1.5 M389 582.5 v-1.5 M463 582.5 v-1.5 M1166 582.5 v-1.5 M703 582.5 v-1.5 M1247 582.5 v-1.5 M1258 582.5 v-1.5 M390 582.5 v-1.5 M814 582.5 v-1.5 M1108 582.5 v-1.5 M653 582.5 v-1.5 M485 582.5 v-1.5 M1314 582.5 v-1.5 M1246 582.5 v-1.5 M236 582.5 v-1.5 M1187 582.5 v-1.5 M674 582.5 v-1.5 M901 582.5 v-1.5 M554 582.5 v-1.5 M730 582.5 v-1.5 M976 582.5 v-1.5 M1287 582.5 v-1.5 M566 582.5 v-1.5 M410 582.5 v-1.5 M641 582.5 v-1.5 M1638 582.5 v-1.5 M1245 582.5 v-1.5 M1177 582.5 v-1.5 M640 582.5 v-1.5 M344 582.5 v-1.5 M180 582.5 v-1.5 M366 582.5 v-1.5 M259 582.5 v-1.5 M1150 582.5 v-1.5 M1586 582.5 v-1.5 M1318 582.5 v-1.5 M581 582.5 v-1.5 M1560 582.5 v-1.5 M1673 582.5 v-1.5 M619 582.5 v-1.5 M328 582.5 v-1.5 M1686 582.5 v-1.5 M500 582.5 v-1.5 M464 582.5 v-1.5 M691 582.5 v-1.5 M213 582.5 v-1.5 M1018 582.5 v-1.5 M955 582.5 v-1.5 M1428 582.5 v-1.5 M1211 582.5 v-1.5 M374 582.5 v-1.5 M747 582.5 v-1.5 M1316 582.5 v-1.5 M397 582.5 v-1.5 M322 582.5 v-1.5 M1509 582.5 v-1.5 M1334 582.5 v-1.5" fill="none" stroke="#f08c28" stroke-width="1" shape-rendering="crispEdges" />
<path d="M3 744.5 H55.5 V651.5 H126 H128 v-1 h3 v1 H134 v-1 h3 v1 H144 v-1 h3 v1 H154 V643.5 h1 V652 L157 653.5 H177 v-1 h2 V653.5 H198 v-1 h2 V653.5 H236 v-1 h2 V653.5 H272 v-1 h2 V653.5 H312 v-1 h2 V653.5 H328 v-1 h2 V653.5 H352 v-1 h2 V653.5 H367 v-1 h2 V653.5 H400 v-1 h2 V653.5 H419 v1 h2 V653.5 H443 v-1 h2 V653.5 H482 v1 h2 V653.5 H455 L466 651.5 H716 V649.5 h1 V651.5 h1 V648.5 h1 V651.5 H1751" fill="none" stroke="#2a2acc" stroke-width="1" shape-rendering="crispEdges" />
<path d="M42.0 859.5 L55.5 859.5 L56.5 857.0 L57.5 851.2 L60.0 835.0 L65.0 815.0 L70.0 796.0 L75.0 778.8 L80.6 759.4" fill="none" stroke="#f08c28" stroke-width="1" shape-rendering="crispEdges" />
<path d="M3.0 950.6 L4.0 950.2 L5.0 950.3 L6.0 950.9 L7.0 950.7 L8.0 949.9 L9.0 950.7 L10.0 950.0 L11.0 950.4 L12.0 950.0 L13.0 950.6 L14.0 950.6 L15.0 950.0 L16.0 950.7 L17.0 950.4 L18.0 950.4 L19.0 949.8 L20.0 949.7 L21.0 950.5 L22.0 949.7 L23.0 950.2 L24.0 949.9 L25.0 949.7 L26.0 950.2 L27.0 949.6 L28.0 950.4 L29.0 949.6 L30.0 949.9 L31.0 949.9 L32.0 950.1 L33.0 950.4 L34.0 950.0 L35.0 950.2 L36.0 949.8 L37.0 950.1 L38.0 949.8 L39.0 949.5 L40.0 949.9 L41.0 949.5 L42.0 949.2 L43.0 949.6 L44.0 949.9 L45.0 949.8 L46.0 949.2 L47.0 949.4 L48.0 949.6 L49.0 949.9 L50.0 949.5 L51.0 949.7 L52.0 949.5 L53.0 949.5 L54.0 949.5 L55.0 948.9 L55.5 949.0 L55.8 928.5 L56.3 962.0 L57.0 934.0 L57.8 955.0 L58.6 940.0 L59.5 952.0 L60.5 946.0 L62.0 950.0 L65.0 945.5 L70.0 949.5 L75.0 946.0 L80.0 948.0 L85.0 946.0 L90.0 947.5 L95.0 946.0 L95.5 946.3 L96.0 946.4 L96.5 946.3 L97.0 946.4 L97.5 945.7 L98.0 946.1 L98.5 946.1 L99.0 946.5 L99.5 946.1 L100.0 946.5 L100.5 946.5 L101.0 945.5 L101.5 946.2 L102.0 945.9 L102.5 946.2 L103.0 946.3 L103.5 945.8 L104.0 945.9 L104.5 946.5 L105.0 945.7 L105.5 946.2 L106.0 946.4 L106.5 946.2 L107.0 946.5 L107.5 945.9 L108.0 945.8 L108.5 945.8 L109.0 946.1 L109.5 946.5 L110.0 946.5 L110.5 946.0 L111.0 945.9 L111.5 945.8 L112.0 945.6 L112.5 946.1 L113.0 945.5 L113.5 945.9 L114.0 946.0 L114.5 945.4 L115.0 945.8 L115.5 946.6 L116.0 945.6 L116.5 946.5 L117.0 945.9 L117.5 946.0 L118.0 945.7 L118.5 945.7 L119.0 946.2 L119.5 945.9 L120.0 946.5 L120.5 945.9 L121.0 945.8 L121.5 945.6 L122.0 945.6 L122.5 945.8 L123.0 946.4 L123.5 946.5 L124.0 946.6 L124.5 945.8 L125.0 945.8 L125.5 946.5 L126.0 946.3 L126.5 946.1 L127.0 946.4 L127.5 946.6 L128.0 945.9 L128.5 946.7 L129.0 953.9 L129.5 959.7 L130.0 966.7 L130.5 968.6 L131.0 970.3 L131.5 971.9 L132.0 973.4 L132.5 975.3 L133.0 976.5 L133.5 978.1 L134.0 976.7 L134.5 974.9 L135.0 974.3 L135.5 972.5 L136.0 971.4 L136.5 970.3 L137.0 968.8 L137.5 967.5 L138.0 966.3 L138.5 967.1 L139.0 968.4 L139.5 969.2 L140.0 970.3 L140.5 971.0 L141.0 970.9 L141.5 972.4 L142.0 973.1 L142.5 974.1 L143.0 974.1 L143.5 974.1 L144.0 973.1 L144.5 971.1 L145.0 970.4 L145.5 969.3 L146.0 968.4 L146.5 967.0 L147.0 966.5 L147.5 965.3 L148.0 966.6 L148.5 966.8 L149.0 967.0 L149.5 968.9 L150.0 968.9 L150.5 969.6 L151.0 971.2 L151.5 971.5 L152.0 972.9 L152.5 970.8 L153.0 970.3 L153.5 969.7 L154.0 968.2 L154.5 966.6 L155.0 966.2 L155.5 964.2 L156.0 963.8 L156.5 964.2 L157.0 964.4 L157.5 966.0 L158.0 966.2 L158.5 966.6 L159.0 967.8 L159.5 967.7 L160.0 968.9 L160.5 967.7 L161.0 967.9 L161.5 967.0 L162.0 966.0 L162.5 966.1 L163.0 966.1 L163.5 964.8 L164.0 965.0 L164.5 963.7 L165.0 963.5 L165.5 964.0 L166.0 964.4 L166.5 964.9 L167.0 964.8 L167.5 965.4 L168.0 965.4 L168.5 965.2 L169.0 965.8 L169.5 965.5 L170.0 966.5 L170.5 965.5 L171.0 965.2 L171.5 965.1 L172.0 964.0 L172.5 963.9 L173.0 963.1 L173.5 962.6 L174.0 962.7 L174.5 961.8 L175.0 960.9 L175.5 962.1 L176.0 961.9 L176.5 962.0 L177.0 962.1 L177.5 962.0 L178.0 963.1 L178.5 962.3 L179.0 962.7 L179.5 963.2 L180.0 963.6 L180.5 963.5 L181.0 962.6 L181.5 961.8 L182.0 961.8 L182.5 961.9 L183.0 961.1 L183.5 961.3 L184.0 960.9 L184.5 959.7 L185.0 959.7 L185.5 959.1 L186.0 959.7 L186.5 959.8 L187.0 959.3 L187.5 959.5 L188.0 959.2 L188.5 959.9 L189.0 959.7 L189.5 959.6 L190.0 958.6 L190.5 959.1 L191.0 959.3 L191.5 959.2 L192.0 959.0 L192.5 959.2 L193.0 958.2 L193.5 958.1 L194.0 958.7 L194.5 958.7 L195.0 957.8 L195.5 958.1 L196.0 958.5 L196.5 958.4 L197.0 958.3 L197.5 957.7 L198.0 957.8 L198.5 957.5 L199.0 958.0 L199.5 957.7 L200.0 957.0 L200.5 957.6 L201.0 957.1 L201.5 957.6 L202.0 956.8 L202.5 956.6 L203.0 957.1 L203.5 957.3 L204.0 956.2 L204.5 956.0 L205.0 956.6 L205.5 956.1 L206.0 956.2 L206.5 955.9 L207.0 956.4 L207.5 956.4 L208.0 956.2 L208.5 956.3 L209.0 955.3 L209.5 955.4 L210.0 956.0 L210.5 955.2 L211.0 955.0 L211.5 955.1 L212.0 954.8 L212.5 955.8 L213.0 955.7 L213.5 955.0 L214.0 954.8 L214.5 955.1 L215.0 955.4 L215.5 954.7 L216.0 955.2 L216.5 954.9 L217.0 954.9 L217.5 954.7 L218.0 954.5 L218.5 954.5 L219.0 954.8 L219.5 954.0 L220.0 954.0 L220.5 954.2 L221.0 954.5 L221.5 953.5 L222.0 953.3 L222.5 953.9 L223.0 953.3 L223.5 954.3 L224.0 953.3 L224.5 953.5 L225.0 953.8 L225.5 953.4 L226.0 953.4 L226.5 953.9 L227.0 953.3 L227.5 953.3 L228.0 952.5 L228.5 953.1 L229.0 952.9 L229.5 952.9 L230.0 952.6 L230.5 953.3 L231.0 953.2 L231.5 952.7 L232.0 952.2 L232.5 952.6 L233.0 952.8 L233.5 952.1 L234.0 952.9 L234.5 952.4 L235.0 952.5 L235.5 951.8 L236.0 951.7 L236.5 952.4 L237.0 951.7 L237.5 951.7 L238.0 952.4 L238.5 951.5 L239.0 951.2 L239.5 951.2 L240.0 951.5 L240.5 952.1 L241.0 951.4 L241.5 951.6 L242.0 951.8 L242.5 950.8 L243.0 951.1 L243.5 951.2 L244.0 951.3 L244.5 950.8 L245.0 951.2 L245.5 951.0 L246.0 950.7 L246.5 951.3 L247.0 951.1 L247.5 950.6 L248.0 950.0 L248.5 950.4 L249.0 949.7 L249.5 949.7 L250.0 950.3 L250.5 949.0 L251.0 949.6 L251.5 948.1 L252.0 948.5 L252.5 948.1 L253.0 947.6 L253.5 946.5 L254.0 944.8 L254.5 944.4 L255.0 943.4 L255.5 941.7 L256.0 939.1 L256.5 935.1 L257.0 932.8 L257.5 928.7 L258.0 924.1 L258.5 920.6 L259.0 916.8 L259.5 912.1 L260.0 906.6 L260.5 901.5 L261.0 895.0 L261.5 888.8 L262.0 883.0 L262.5 877.1" fill="none" stroke="#83309f" stroke-width="1" shape-rendering="crispEdges" />
<path d="M737.5 875.7 L738.0 877.1 L738.5 878.0 L739.0 880.3 L739.5 881.5 L740.0 882.4 L740.5 882.4 L741.0 884.1 L741.5 884.8 L742.0 884.8 L742.5 886.2 L743.0 886.0 L743.5 887.5 L744.0 887.5 L744.5 887.5 L745.0 888.5 L745.5 888.9 L746.0 890.2 L746.5 890.8 L747.0 891.1 L747.5 891.0 L748.0 891.1 L748.5 891.7 L749.0 892.1 L749.5 893.0 L750.0 893.9 L750.5 893.0 L751.0 893.3 L751.5 894.2 L752.0 894.0 L752.5 894.5 L753.0 894.6 L753.5 894.0 L754.0 895.2 L754.5 894.7 L755.0 894.5 L755.5 894.7 L756.0 895.8 L756.5 895.8 L757.0 895.3 L757.5 896.7 L758.0 897.2 L758.5 896.1 L759.0 897.4 L759.5 896.8 L760.0 897.6 L760.5 898.3 L761.0 898.4 L761.5 897.8 L762.0 898.3 L762.5 898.4 L763.0 899.0 L763.5 899.4 L764.0 898.3 L764.5 898.7 L765.0 899.2 L765.5 900.1 L766.0 899.1 L766.5 900.5 L767.0 900.8 L767.5 900.2 L768.0 900.6 L768.5 901.3 L769.0 901.2 L769.5 901.7 L770.0 901.6 L770.5 901.5 L771.0 901.8 L771.5 902.2 L772.0 901.3 L772.5 902.1 L773.0 902.5 L773.5 902.9 L774.0 902.6 L774.5 902.3 L775.0 903.1 L775.5 902.8 L776.0 902.2 L776.5 902.9 L777.0 902.8 L777.5 903.4 L778.0 903.7 L778.5 904.0 L779.0 902.8 L779.5 903.7 L780.0 904.1 L780.5 903.4 L781.0 904.3 L781.5 904.3 L782.0 903.8 L782.5 904.9 L783.0 904.0 L783.5 903.8 L784.0 904.6 L784.5 904.6 L785.0 905.5 L785.5 905.7 L786.0 905.5 L786.5 904.5 L787.0 905.4 L787.5 905.6 L788.0 905.4 L788.5 905.0 L789.0 905.7 L789.5 905.9 L790.0 906.7 L790.5 906.5 L791.0 906.8 L791.5 905.7 L792.0 905.9 L792.5 906.6 L793.0 906.8 L793.5 906.5 L794.0 906.9 L794.5 907.7 L795.0 906.9 L795.5 907.8 L796.0 906.7 L796.5 906.8 L797.0 907.8 L797.5 907.1 L798.0 907.9 L798.5 908.1 L799.0 908.5 L799.5 908.2 L800.0 908.6 L800.5 908.6 L801.0 908.6 L801.5 908.4 L802.0 908.8 L802.5 908.8 L803.0 908.3 L803.5 908.4 L804.0 908.9 L804.5 909.5 L805.0 908.7 L805.5 909.5 L806.0 909.6 L806.5 909.6 L807.0 910.2 L807.5 909.7 L808.0 909.0 L808.5 909.7 L809.0 910.0 L809.5 909.2 L810.0 909.6 L810.5 910.6 L811.0 910.8 L811.5 909.6 L812.0 910.0 L812.5 910.1 L813.0 910.2 L813.5 910.5 L814.0 910.7 L814.5 910.5 L815.0 910.3 L815.5 910.3 L816.0 910.3 L816.5 911.3 L817.0 911.5 L817.5 910.8 L818.0 911.1 L818.5 912.1 L819.0 912.1 L819.5 911.7 L820.0 911.2 L820.5 912.1 L821.0 912.2 L821.5 911.3 L822.0 911.3 L822.5 911.4 L823.0 912.5 L823.5 912.5 L824.0 911.8 L824.5 913.0 L825.0 913.0 L825.5 911.9 L826.0 912.8 L826.5 912.4 L827.0 912.4 L827.5 912.3 L828.0 913.3 L828.5 913.5 L829.0 912.3 L829.5 912.9 L830.0 912.6 L830.5 912.7 L831.0 914.0 L831.5 913.6 L832.0 913.4 L832.5 913.7 L833.0 913.9 L833.5 914.0 L834.0 913.4 L834.5 914.2 L835.0 913.1 L835.5 913.9 L836.0 913.7 L836.5 914.1 L837.0 913.8 L837.5 914.6 L838.0 913.4 L838.5 914.7 L839.0 913.9 L839.5 914.1 L840.0 913.8 L840.5 914.0 L841.0 913.9 L841.5 915.2 L842.0 914.6 L842.5 914.5 L843.0 914.2 L843.5 914.3 L844.0 914.9 L844.5 914.6 L845.0 914.4 L845.5 915.4 L846.0 914.8 L846.5 915.9 L847.0 916.0 L847.5 915.5 L848.0 915.9 L848.5 915.8 L849.0 915.8 L849.5 915.3 L850.0 916.1 L850.5 916.4 L851.0 916.2 L851.5 915.8 L852.0 915.4 L852.5 916.7 L853.0 916.3 L853.5 916.3 L854.0 915.7 L854.5 917.0 L855.0 916.0 L855.5 916.2 L856.0 916.2 L856.5 917.2 L857.0 916.0 L857.5 917.2 L858.0 916.9 L858.5 916.9 L859.0 917.1 L859.5 917.3 L860.0 916.4 L860.5 916.4 L861.0 916.4 L861.5 917.0 L862.0 916.6 L862.5 917.6 L863.0 917.4 L863.5 916.7 L864.0 916.8 L864.5 917.6 L865.0 917.9 L865.5 917.8 L866.0 917.7 L866.5 918.3 L867.0 918.4 L867.5 917.8 L868.0 918.5 L868.5 917.6 L869.0 917.9 L869.5 918.4 L870.0 917.7 L870.5 918.9 L871.0 918.8 L871.5 918.9 L872.0 918.3 L872.5 918.2 L873.0 918.1 L873.5 918.4 L874.0 919.1 L874.5 918.1 L875.0 918.3 L875.5 918.6 L876.0 918.6 L876.5 919.1 L877.0 919.5 L877.5 918.4 L878.0 918.5 L878.5 919.6 L879.0 919.5 L879.5 919.1 L880.0 919.0 L880.5 918.8 L881.0 919.5 L881.5 920.1 L882.0 919.0 L882.5 919.4 L883.0 919.2 L883.5 920.0 L884.0 919.3 L884.5 919.7 L885.0 919.7 L885.5 920.8 L886.0 920.8 L886.5 920.0 L887.0 920.4 L887.5 919.9 L888.0 920.2 L888.5 920.9 L889.0 920.4 L889.5 920.1 L890.0 920.9 L890.5 921.3 L891.0 921.4 L891.5 920.4 L892.0 921.4 L892.5 921.7 L893.0 920.4 L893.5 921.4 L894.0 921.8 L894.5 921.7 L895.0 921.9 L895.5 921.0 L896.0 922.1 L896.5 921.2 L897.0 920.9 L897.5 921.1 L898.0 921.6 L898.5 921.6 L899.0 921.5 L899.5 921.9 L900.0 922.0 L900.5 921.5 L901.0 922.2 L901.5 922.1 L902.0 922.1 L902.5 922.2 L903.0 922.9 L903.5 923.0 L904.0 922.3 L904.5 921.8 L905.0 922.0 L905.5 922.2 L906.0 922.5 L906.5 922.3 L907.0 922.5 L907.5 922.1 L908.0 922.8 L908.5 922.8 L909.0 922.5 L909.5 923.1 L910.0 923.7 L910.5 923.7 L911.0 922.9 L911.5 922.5 L912.0 923.1 L912.5 922.6 L913.0 923.3 L913.5 923.4 L914.0 923.1 L914.5 922.9 L915.0 923.5 L915.5 923.5 L916.0 924.3 L916.5 924.1 L917.0 923.1 L917.5 924.2 L918.0 924.0 L918.5 923.2 L919.0 923.6 L919.5 924.4 L920.0 923.4 L920.5 924.4 L921.0 924.1 L921.5 923.8 L922.0 924.2 L922.5 924.4 L923.0 924.8 L923.5 925.0 L924.0 924.6 L924.5 924.7 L925.0 923.8 L925.5 924.8 L926.0 925.0 L926.5 924.9 L927.0 924.2 L927.5 924.5 L928.0 924.6 L928.5 925.4 L929.0 924.6 L929.5 924.3 L930.0 925.5 L930.5 925.3 L931.0 925.3 L931.5 925.4 L932.0 924.5 L932.5 925.2 L933.0 925.6 L933.5 925.3 L934.0 925.9 L934.5 925.1 L935.0 926.2 L935.5 926.1 L936.0 925.3 L936.5 925.4 L937.0 925.2 L937.5 925.1 L938.0 925.1 L938.5 925.3 L939.0 925.7 L939.5 925.9 L940.0 925.3 L940.5 925.9 L941.0 926.6 L941.5 926.5 L942.0 926.5 L942.5 925.8 L943.0 926.9 L943.5 925.9 L944.0 926.4 L944.5 926.2 L945.0 926.9 L945.5 926.2 L946.0 927.3 L946.5 927.0 L947.0 926.0 L947.5 926.3 L948.0 926.7 L948.5 927.2 L949.0 927.0 L949.5 927.4 L950.0 926.6 L950.5 927.6 L951.0 926.6 L951.5 927.6 L952.0 927.4 L952.5 927.2 L953.0 927.4 L953.5 927.2 L954.0 927.0 L954.5 927.5 L955.0 927.2 L955.5 927.4 L956.0 928.2 L956.5 928.4 L957.0 927.2 L957.5 927.5 L958.0 928.2 L958.5 927.4 L959.0 927.8 L959.5 927.3 L960.0 928.5 L960.5 928.5 L961.0 927.7 L961.5 928.2 L962.0 927.7 L962.5 927.6 L963.0 928.5 L963.5 928.9 L964.0 928.5 L964.5 927.6 L965.0 928.2 L965.5 928.8 L966.0 929.0 L966.5 928.9 L967.0 927.7 L967.5 928.8 L968.0 927.9 L968.5 927.9 L969.0 927.8 L969.5 928.3 L970.0 928.2 L970.5 928.8 L971.0 928.9 L971.5 928.7 L972.0 928.5 L972.5 928.6 L973.0 928.7 L973.5 928.9 L974.0 928.5 L974.5 928.8 L975.0 928.8 L975.5 928.7 L976.0 928.9 L976.5 928.5 L977.0 928.7 L977.5 929.4 L978.0 929.6 L978.5 929.1 L979.0 928.8 L979.5 929.7 L980.0 928.6 L980.5 929.5 L981.0 929.4 L981.5 928.4 L982.0 929.4 L982.5 928.7 L983.0 928.9 L983.5 929.8 L984.0 929.1 L984.5 929.0 L985.0 929.6 L985.5 930.0 L986.0 929.9 L986.5 929.3 L987.0 929.1 L987.5 930.1 L988.0 930.1 L988.5 928.8 L989.0 930.2 L989.5 929.5 L990.0 929.4 L990.5 929.0 L991.0 929.9 L991.5 929.4 L992.0 929.9 L992.5 929.4 L993.0 929.6 L993.5 929.5 L994.0 930.4 L994.5 929.9 L995.0 930.3 L995.5 929.2 L996.0 929.8 L996.5 930.4 L997.0 930.0 L997.5 930.1 L998.0 929.9 L998.5 929.9 L999.0 929.7 L999.5 930.0 L1000.0 929.8 L1000.5 930.4 L1001.0 929.8 L1001.5 930.5 L1002.0 930.3 L1002.5 930.3 L1003.0 930.5 L1003.5 929.9 L1004.0 929.5 L1004.5 930.3 L1005.0 929.8 L1005.5 930.2 L1006.0 929.7 L1006.5 929.8 L1007.0 930.3 L1007.5 930.6 L1008.0 930.0 L1008.5 930.8 L1009.0 930.5 L1009.5 929.8 L1010.0 929.6 L1010.5 930.2 L1011.0 930.6 L1011.5 930.7 L1012.0 929.7 L1012.5 931.0 L1013.0 930.5 L1013.5 930.3 L1014.0 930.5 L1014.5 929.7 L1015.0 930.9 L1015.5 931.0 L1016.0 929.9 L1016.5 930.1 L1017.0 930.0 L1017.5 930.0 L1018.0 931.1 L1018.5 931.0 L1019.0 930.2 L1019.5 929.9 L1020.0 930.0 L1020.5 930.0 L1021.0 930.2 L1021.5 930.6 L1022.0 930.0 L1022.5 930.4 L1023.0 930.4 L1023.5 931.1 L1024.0 931.3 L1024.5 930.5 L1025.0 931.4 L1025.5 930.4 L1026.0 930.4 L1026.5 930.1 L1027.0 930.1 L1027.5 931.5 L1028.0 930.3 L1028.5 931.4 L1029.0 930.6 L1029.5 930.9 L1030.0 930.4 L1030.5 931.1 L1031.0 931.7 L1031.5 931.4 L1032.0 931.3 L1032.5 931.5 L1033.0 930.9 L1033.5 930.7 L1034.0 930.3 L1034.5 930.8 L1035.0 930.4 L1035.5 931.0 L1036.0 930.4 L1036.5 930.6 L1037.0 931.6 L1037.5 931.1 L1038.0 931.1 L1038.5 931.6 L1039.0 931.4 L1039.5 931.7 L1040.0 931.2 L1040.5 931.1 L1041.0 930.5 L1041.5 931.9 L1042.0 930.8 L1042.5 931.8 L1043.0 931.2 L1043.5 931.7 L1044.0 931.3 L1044.5 931.4 L1045.0 931.1 L1045.5 930.7 L1046.0 931.0 L1046.5 930.7 L1047.0 931.4 L1047.5 931.0 L1048.0 931.8 L1048.5 931.4 L1049.0 931.0 L1049.5 931.0 L1050.0 932.2 L1050.5 932.2 L1051.0 932.1 L1051.5 931.0 L1052.0 930.9 L1052.5 931.5 L1053.0 931.3 L1053.5 931.8 L1054.0 931.8 L1054.5 931.8 L1055.0 932.0 L1055.5 931.4 L1056.0 931.6 L1056.5 931.3 L1057.0 932.0 L1057.5 931.3 L1058.0 931.3 L1058.5 931.3 L1059.0 931.2 L1059.5 931.1 L1060.0 931.8 L1060.5 931.2 L1061.0 930.9 L1061.5 931.3 L1062.0 932.0 L1062.5 932.0 L1063.0 932.2 L1063.5 931.9 L1064.0 931.6 L1064.5 931.4 L1065.0 931.0 L1065.5 931.9 L1066.0 931.8 L1066.5 931.6 L1067.0 931.0 L1067.5 932.1 L1068.0 931.7 L1068.5 931.6 L1069.0 932.2 L1069.5 932.4 L1070.0 931.6 L1070.5 932.0 L1071.0 931.8 L1071.5 932.1 L1072.0 932.1 L1072.5 931.4 L1073.0 931.1 L1073.5 932.1 L1074.0 931.1 L1074.5 932.4 L1075.0 931.2 L1075.5 932.3 L1076.0 932.4 L1076.5 931.9 L1077.0 931.1 L1077.5 932.1 L1078.0 931.1 L1078.5 932.0 L1079.0 932.3 L1079.5 932.0 L1080.0 931.6 L1080.5 931.8 L1081.0 931.3 L1081.5 932.1 L1082.0 932.1 L1082.5 932.2 L1083.0 931.1 L1083.5 932.4 L1084.0 932.1 L1084.5 931.9 L1085.0 932.2 L1085.5 931.6 L1086.0 932.3 L1086.5 932.0 L1087.0 931.7 L1087.5 931.5 L1088.0 931.7 L1088.5 932.3 L1089.0 932.2 L1089.5 931.7 L1090.0 932.5 L1090.5 931.8 L1091.0 932.0 L1091.5 931.3 L1092.0 932.6 L1092.5 932.6 L1093.0 932.3 L1093.5 931.8 L1094.0 931.5 L1094.5 931.5 L1095.0 932.4 L1095.5 932.3 L1096.0 931.8 L1096.5 931.5 L1097.0 932.4 L1097.5 932.3 L1098.0 932.6 L1098.5 932.0 L1099.0 932.5 L1099.5 932.0 L1100.0 932.5 L1100.5 931.3 L1101.0 932.0 L1101.5 932.4 L1102.0 932.3 L1102.5 932.7 L1103.0 932.1 L1103.5 931.7 L1104.0 932.3 L1104.5 932.4 L1105.0 932.2 L1105.5 932.1 L1106.0 931.2 L1106.5 931.1 L1107.0 931.5 L1107.5 931.6 L1108.0 932.3 L1108.5 931.5 L1109.0 931.1 L1109.5 931.1 L1110.0 932.6 L1110.5 931.4 L1111.0 931.5 L1111.5 932.4 L1112.0 932.4 L1112.5 931.5 L1113.0 931.9 L1113.5 931.6 L1114.0 931.4 L1114.5 932.4 L1115.0 931.0 L1115.5 932.0 L1116.0 932.1 L1116.5 932.1 L1117.0 931.8 L1117.5 932.3 L1118.0 932.1 L1118.5 931.9 L1119.0 931.0 L1119.5 932.2 L1120.0 931.1 L1120.5 931.1 L1121.0 931.3 L1121.5 931.6 L1122.0 931.3 L1122.5 931.5 L1123.0 931.3 L1123.5 931.2 L1124.0 931.9 L1124.5 931.8 L1125.0 930.9 L1125.5 932.1 L1126.0 931.0 L1126.5 931.2 L1127.0 931.9 L1127.5 932.0 L1128.0 932.2 L1128.5 932.0 L1129.0 931.5 L1129.5 932.1 L1130.0 931.9 L1130.5 931.9 L1131.0 932.1 L1131.5 932.1 L1132.0 931.4 L1132.5 931.3 L1133.0 931.8 L1133.5 931.9 L1134.0 931.7 L1134.5 931.1 L1135.0 930.7 L1135.5 930.8 L1136.0 931.9 L1136.5 931.9 L1137.0 930.6 L1137.5 931.1 L1138.0 931.5 L1138.5 931.3 L1139.0 930.6 L1139.5 931.8 L1140.0 931.5 L1140.5 931.0 L1141.0 931.2 L1141.5 931.0 L1142.0 931.4 L1142.5 931.8 L1143.0 931.3 L1143.5 930.9 L1144.0 930.9 L1144.5 931.7 L1145.0 931.5 L1145.5 930.9 L1146.0 931.8 L1146.5 931.3 L1147.0 931.9 L1147.5 931.7 L1148.0 930.5 L1148.5 931.0 L1149.0 930.3 L1149.5 931.8 L1150.0 930.7 L1150.5 930.6 L1151.0 931.1 L1151.5 931.7 L1152.0 931.3 L1152.5 931.6 L1153.0 931.2 L1153.5 931.1 L1154.0 930.9 L1154.5 931.1 L1155.0 930.3 L1155.5 930.4 L1156.0 931.7 L1156.5 930.5 L1157.0 930.6 L1157.5 930.9 L1158.0 931.3 L1158.5 930.3 L1159.0 931.3 L1159.5 931.0 L1160.0 930.2 L1160.5 930.7 L1161.0 931.5 L1161.5 931.2 L1162.0 930.3 L1162.5 931.0 L1163.0 930.2 L1163.5 930.7 L1164.0 930.5 L1164.5 931.5 L1165.0 930.8 L1165.5 931.5 L1166.0 930.7 L1166.5 931.1 L1167.0 930.0 L1167.5 931.3 L1168.0 930.9 L1168.5 930.5 L1169.0 931.2 L1169.5 931.3 L1170.0 930.2 L1170.5 930.0 L1171.0 930.9 L1171.5 931.2 L1172.0 930.1 L1172.5 930.7 L1173.0 930.0 L1173.5 930.0 L1174.0 930.6 L1174.5 931.2 L1175.0 931.1 L1175.5 930.9 L1176.0 930.9 L1176.5 930.1 L1177.0 930.5 L1177.5 930.0 L1178.0 930.1 L1178.5 930.0 L1179.0 930.4 L1179.5 929.8 L1180.0 930.0 L1180.5 930.8 L1181.0 930.6 L1181.5 930.0 L1182.0 930.0 L1182.5 930.6 L1183.0 929.7 L1183.5 930.7 L1184.0 930.8 L1184.5 930.9 L1185.0 929.8 L1185.5 930.7 L1186.0 930.3 L1186.5 929.8 L1187.0 930.6 L1187.5 929.7 L1188.0 929.6 L1188.5 930.7 L1189.0 930.8 L1189.5 930.4 L1190.0 929.4 L1190.5 929.9 L1191.0 930.1 L1191.5 929.5 L1192.0 930.4 L1192.5 929.8 L1193.0 929.9 L1193.5 929.8 L1194.0 929.1 L1194.5 930.4 L1195.0 930.3 L1195.5 930.4 L1196.0 929.8 L1196.5 929.6 L1197.0 929.4 L1197.5 929.2 L1198.0 929.2 L1198.5 929.7 L1199.0 929.5 L1199.5 929.9 L1200.0 930.3 L1200.5 929.1 L1201.0 930.0 L1201.5 929.3 L1202.0 929.3 L1202.5 929.1 L1203.0 929.6 L1203.5 929.3 L1204.0 928.8 L1204.5 929.5 L1205.0 928.7 L1205.5 929.0 L1206.0 929.1 L1206.5 929.7 L1207.0 929.6 L1207.5 929.3 L1208.0 929.1 L1208.5 928.8 L1209.0 929.1 L1209.5 929.0 L1210.0 929.1 L1210.5 929.0 L1211.0 928.6 L1211.5 928.8 L1212.0 928.8 L1212.5 928.3 L1213.0 928.3 L1213.5 929.2 L1214.0 928.6 L1214.5 929.2 L1215.0 929.3 L1215.5 929.0 L1216.0 928.7 L1216.5 929.2 L1217.0 928.8 L1217.5 928.0 L1218.0 929.1 L1218.5 928.6 L1219.0 928.6 L1219.5 928.9 L1220.0 928.8 L1220.5 929.2 L1221.0 928.7 L1221.5 928.0 L1222.0 928.7 L1222.5 928.8 L1223.0 927.7 L1223.5 928.7 L1224.0 928.6 L1224.5 928.6 L1225.0 928.2 L1225.5 928.1 L1226.0 928.4 L1226.5 927.8 L1227.0 928.7 L1227.5 927.7 L1228.0 928.3 L1228.5 928.4 L1229.0 927.8 L1229.5 927.6 L1230.0 928.7 L1230.5 928.8 L1231.0 928.2 L1231.5 928.5 L1232.0 927.9 L1232.5 927.6 L1233.0 928.0 L1233.5 927.2 L1234.0 928.0 L1234.5 928.3 L1235.0 927.6 L1235.5 928.5 L1236.0 927.2 L1236.5 927.4 L1237.0 927.9 L1237.5 927.8 L1238.0 928.3 L1238.5 927.0 L1239.0 928.1 L1239.5 927.0 L1240.0 928.1 L1240.5 927.8 L1241.0 926.8 L1241.5 928.1 L1242.0 927.2 L1242.5 927.5 L1243.0 928.1 L1243.5 927.3 L1244.0 926.8 L1244.5 927.0 L1245.0 927.7 L1245.5 926.8 L1246.0 927.0 L1246.5 926.9 L1247.0 927.2 L1247.5 926.7 L1248.0 927.9 L1248.5 927.8 L1249.0 926.6 L1249.5 926.6 L1250.0 927.2 L1250.5 927.8 L1251.0 927.5 L1251.5 926.5 L1252.0 927.6 L1252.5 926.3 L1253.0 927.0 L1253.5 927.3 L1254.0 926.8 L1254.5 927.1 L1255.0 927.2 L1255.5 926.4 L1256.0 926.3 L1256.5 926.5 L1257.0 926.2 L1257.5 926.3 L1258.0 926.1 L1258.5 926.5 L1259.0 927.0 L1259.5 926.2 L1260.0 926.6 L1260.5 926.0 L1261.0 926.2 L1261.5 926.4 L1262.0 927.2 L1262.5 926.1 L1263.0 925.9 L1263.5 927.0 L1264.0 926.2 L1264.5 926.3 L1265.0 926.3 L1265.5 926.4 L1266.0 925.7 L1266.5 926.6 L1267.0 926.9 L1267.5 925.8 L1268.0 926.9 L1268.5 926.7 L1269.0 926.4 L1269.5 926.4 L1270.0 926.1 L1270.5 926.3 L1271.0 926.7 L1271.5 926.5 L1272.0 926.2 L1272.5 926.6 L1273.0 925.3 L1273.5 925.9 L1274.0 925.3 L1274.5 926.2 L1275.0 926.2 L1275.5 925.9 L1276.0 925.4 L1276.5 925.2 L1277.0 926.3 L1277.5 925.8 L1278.0 925.8 L1278.5 926.1 L1279.0 925.2 L1279.5 925.9 L1280.0 925.7 L1280.5 926.3 L1281.0 925.9 L1281.5 926.3 L1282.0 926.1 L1282.5 925.4 L1283.0 925.8 L1283.5 925.0 L1284.0 925.3 L1284.5 925.7 L1285.0 925.2 L1285.5 925.4 L1286.0 925.5 L1286.5 926.1 L1287.0 924.8 L1287.5 925.9 L1288.0 924.8 L1288.5 926.0 L1289.0 924.8 L1289.5 925.4 L1290.0 925.3 L1290.5 924.4 L1291.0 925.2 L1291.5 924.8 L1292.0 925.2 L1292.5 925.1 L1293.0 925.4 L1293.5 924.7 L1294.0 925.0 L1294.5 925.0 L1295.0 925.5 L1295.5 925.4 L1296.0 925.5 L1296.5 924.8 L1297.0 925.3 L1297.5 924.0 L1298.0 924.6 L1298.5 924.0 L1299.0 924.5 L1299.5 924.3 L1300.0 924.6 L1300.5 924.9 L1301.0 923.8 L1301.5 924.6 L1302.0 923.9 L1302.5 924.3 L1303.0 925.0 L1303.5 924.6 L1304.0 924.3 L1304.5 924.9 L1305.0 924.8 L1305.5 923.7 L1306.0 924.2 L1306.5 924.0 L1307.0 923.5 L1307.5 924.7 L1308.0 923.8 L1308.5 923.5 L1309.0 923.7 L1309.5 924.5 L1310.0 923.6 L1310.5 924.0 L1311.0 924.0 L1311.5 924.0 L1312.0 924.3 L1312.5 924.2 L1313.0 924.1 L1313.5 923.5 L1314.0 924.0 L1314.5 923.5 L1315.0 924.0 L1315.5 924.0 L1316.0 924.4 L1316.5 923.0 L1317.0 924.2 L1317.5 924.1 L1318.0 923.3 L1318.5 923.7 L1319.0 924.1 L1319.5 923.9 L1320.0 924.1 L1320.5 923.2 L1321.0 924.0 L1321.5 923.9 L1322.0 923.0 L1322.5 923.4 L1323.0 923.2 L1323.5 922.6 L1324.0 922.6 L1324.5 923.7 L1325.0 923.8 L1325.5 922.8 L1326.0 923.3 L1326.5 923.7 L1327.0 922.5 L1327.5 922.8 L1328.0 923.5 L1328.5 923.2 L1329.0 923.7 L1329.5 923.2 L1330.0 923.3 L1330.5 923.1 L1331.0 923.4 L1331.5 922.5 L1332.0 922.3 L1332.5 923.4 L1333.0 922.3 L1333.5 923.3 L1334.0 922.3 L1334.5 922.3 L1335.0 922.0 L1335.5 922.1 L1336.0 923.3 L1336.5 922.3 L1337.0 923.3 L1337.5 921.9 L1338.0 922.3 L1338.5 922.6 L1339.0 923.1 L1339.5 922.0 L1340.0 922.2 L1340.5 922.3 L1341.0 922.0 L1341.5 921.6 L1342.0 922.1 L1342.5 922.5 L1343.0 922.2 L1343.5 922.2 L1344.0 921.7 L1344.5 921.8 L1345.0 922.1 L1345.5 921.5 L1346.0 921.8 L1346.5 922.6 L1347.0 922.6 L1347.5 922.6 L1348.0 921.9 L1348.5 922.6 L1349.0 922.0 L1349.5 921.2 L1350.0 921.8 L1350.5 922.5 L1351.0 921.5 L1351.5 921.5 L1352.0 921.1 L1352.5 921.5 L1353.0 921.1 L1353.5 922.3 L1354.0 921.6 L1354.5 921.2 L1355.0 921.3 L1355.5 921.6 L1356.0 921.0 L1356.5 921.9 L1357.0 921.2 L1357.5 921.3 L1358.0 922.1 L1358.5 921.3 L1359.0 921.1 L1359.5 921.7 L1360.0 921.9 L1360.5 921.5 L1361.0 921.2 L1361.5 921.8 L1362.0 920.7 L1362.5 921.8 L1363.0 921.3 L1363.5 920.6 L1364.0 920.6 L1364.5 920.6 L1365.0 920.7 L1365.5 921.3 L1366.0 921.2 L1366.5 921.0 L1367.0 920.8 L1367.5 920.4 L1368.0 920.2 L1368.5 920.8 L1369.0 921.0 L1369.5 921.1 L1370.0 920.3 L1370.5 920.1 L1371.0 920.3 L1371.5 920.0 L1372.0 920.1 L1372.5 920.7 L1373.0 920.8 L1373.5 920.2 L1374.0 921.2 L1374.5 919.8 L1375.0 920.1 L1375.5 921.0 L1376.0 920.7 L1376.5 920.4 L1377.0 920.1 L1377.5 920.6 L1378.0 920.3 L1378.5 919.8 L1379.0 920.3 L1379.5 920.9 L1380.0 920.8 L1380.5 919.7 L1381.0 919.7 L1381.5 919.5 L1382.0 920.2 L1382.5 920.4 L1383.0 920.7 L1383.5 920.2 L1384.0 919.8 L1384.5 920.6 L1385.0 919.2 L1385.5 920.0 L1386.0 920.1 L1386.5 919.7 L1387.0 920.3 L1387.5 920.3 L1388.0 919.7 L1388.5 919.6 L1389.0 920.2 L1389.5 918.9 L1390.0 918.9 L1390.5 918.9 L1391.0 919.4 L1391.5 919.6 L1392.0 919.3 L1392.5 919.3 L1393.0 919.2 L1393.5 918.9 L1394.0 920.0 L1394.5 919.2 L1395.0 919.4 L1395.5 918.8 L1396.0 918.7 L1396.5 918.7 L1397.0 919.7 L1397.5 918.6 L1398.0 918.9 L1398.5 919.2 L1399.0 918.5 L1399.5 919.1 L1400.0 919.0 L1400.5 919.4 L1401.0 919.3 L1401.5 918.6 L1402.0 918.4 L1402.5 919.5 L1403.0 918.1 L1403.5 919.4 L1404.0 918.6 L1404.5 919.2 L1405.0 919.3 L1405.5 918.9 L1406.0 918.6 L1406.5 918.7 L1407.0 918.0 L1407.5 919.3 L1408.0 919.3 L1408.5 917.9 L1409.0 919.3 L1409.5 918.1 L1410.0 917.8 L1410.5 919.1 L1411.0 918.0 L1411.5 918.1 L1412.0 918.8 L1412.5 918.7 L1413.0 918.1 L1413.5 917.7 L1414.0 918.7 L1414.5 917.6 L1415.0 918.6 L1415.5 918.1 L1416.0 918.4 L1416.5 917.6 L1417.0 918.0 L1417.5 918.7 L1418.0 917.5 L1418.5 918.0 L1419.0 918.6 L1419.5 918.1 L1420.0 917.9 L1420.5 918.6 L1421.0 918.2 L1421.5 918.2 L1422.0 918.3 L1422.5 918.2 L1423.0 917.5 L1423.5 917.1 L1424.0 917.0 L1424.5 917.7 L1425.0 918.0 L1425.5 917.2 L1426.0 917.5 L1426.5 917.2 L1427.0 917.1 L1427.5 917.2 L1428.0 917.4 L1428.5 917.1 L1429.0 917.4 L1429.5 917.7 L1430.0 917.6 L1430.5 916.8 L1431.0 917.2 L1431.5 917.4 L1432.0 917.0 L1432.5 917.0 L1433.0 916.8 L1433.5 917.4 L1434.0 916.9 L1434.5 916.4 L1435.0 917.0 L1435.5 917.6 L1436.0 916.4 L1436.5 916.4 L1437.0 916.3 L1437.5 916.5 L1438.0 916.6 L1438.5 917.1 L1439.0 916.7 L1439.5 917.1 L1440.0 916.5 L1440.5 916.2 L1441.0 917.4 L1441.5 916.8 L1442.0 916.6 L1442.5 916.0 L1443.0 916.8 L1443.5 917.2 L1444.0 916.1 L1444.5 915.9 L1445.0 916.5 L1445.5 916.8 L1446.0 915.8 L1446.5 916.0 L1447.0 917.2 L1447.5 916.7 L1448.0 916.8 L1448.5 916.8 L1449.0 915.7 L1449.5 916.8 L1450.0 915.9 L1450.5 915.8 L1451.0 916.9 L1451.5 915.8 L1452.0 915.7 L1452.5 916.6 L1453.0 916.0 L1453.5 916.6 L1454.0 915.5 L1454.5 915.9 L1455.0 915.5 L1455.5 915.4 L1456.0 916.0 L1456.5 915.8 L1457.0 915.5 L1457.5 916.5 L1458.0 916.1 L1458.5 915.5 L1459.0 915.2 L1459.5 916.2 L1460.0 915.1 L1460.5 915.3 L1461.0 915.2 L1461.5 916.2 L1462.0 915.0 L1462.5 915.3 L1463.0 915.7 L1463.5 916.1 L1464.0 915.9 L1464.5 915.6 L1465.0 916.1 L1465.5 915.4 L1466.0 916.1 L1466.5 915.8 L1467.0 915.9 L1467.5 915.4 L1468.0 915.0 L1468.5 914.8 L1469.0 915.6 L1469.5 914.7 L1470.0 915.0 L1470.5 915.3 L1471.0 915.9 L1471.5 915.3 L1472.0 915.3 L1472.5 914.5 L1473.0 914.3 L1473.5 914.9 L1474.0 915.1 L1474.5 914.3 L1475.0 914.6 L1475.5 914.3 L1476.0 915.1 L1476.5 914.8 L1477.0 914.6 L1477.5 914.8 L1478.0 915.1 L1478.5 915.3 L1479.0 914.8 L1479.5 914.8 L1480.0 914.4 L1480.5 915.1 L1481.0 913.9 L1481.5 914.2 L1482.0 914.3 L1482.5 914.8 L1483.0 914.9 L1483.5 915.0 L1484.0 914.8 L1484.5 914.4 L1485.0 913.8 L1485.5 914.2 L1486.0 914.6 L1486.5 914.8 L1487.0 915.0 L1487.5 914.2 L1488.0 914.6 L1488.5 913.9 L1489.0 914.0 L1489.5 913.4 L1490.0 914.2 L1490.5 913.9 L1491.0 914.0 L1491.5 914.0 L1492.0 914.2 L1492.5 914.6 L1493.0 914.5 L1493.5 913.7 L1494.0 914.4 L1494.5 913.7 L1495.0 913.8 L1495.5 914.2 L1496.0 914.2 L1496.5 913.3 L1497.0 913.2 L1497.5 913.3 L1498.0 914.3 L1498.5 913.0 L1499.0 913.1 L1499.5 913.4 L1500.0 913.5 L1500.5 914.3 L1501.0 913.2 L1501.5 913.0 L1502.0 913.0 L1502.5 913.7 L1503.0 913.8 L1503.5 913.2 L1504.0 912.7 L1504.5 913.6 L1505.0 913.0 L1505.5 912.6 L1506.0 912.8 L1506.5 912.6 L1507.0 913.1 L1507.5 912.7 L1508.0 913.6 L1508.5 913.2 L1509.0 912.5 L1509.5 912.8 L1510.0 913.1 L1510.5 913.8 L1511.0 913.8 L1511.5 913.7 L1512.0 912.8 L1512.5 912.5 L1513.0 913.3 L1513.5 913.2 L1514.0 912.3 L1514.5 912.6 L1515.0 912.3 L1515.5 912.1 L1516.0 913.1 L1516.5 912.3 L1517.0 912.8 L1517.5 912.8 L1518.0 912.2 L1518.5 912.0 L1519.0 912.9 L1519.5 913.1 L1520.0 912.2 L1520.5 912.5 L1521.0 912.9 L1521.5 913.0 L1522.0 911.9 L1522.5 912.5 L1523.0 912.4 L1523.5 912.9 L1524.0 911.7 L1524.5 912.2 L1525.0 911.9 L1525.5 912.2 L1526.0 913.0 L1526.5 912.8 L1527.0 911.4 L1527.5 911.7 L1528.0 911.9 L1528.5 911.9 L1529.0 912.3 L1529.5 911.9 L1530.0 911.8 L1530.5 911.6 L1531.0 912.2 L1531.5 912.0 L1532.0 912.0 L1532.5 911.6 L1533.0 911.8 L1533.5 912.1 L1534.0 911.8 L1534.5 911.0 L1535.0 912.0 L1535.5 911.7 L1536.0 911.8 L1536.5 911.2 L1537.0 911.8 L1537.5 911.6 L1538.0 912.3 L1538.5 911.1 L1539.0 912.2 L1539.5 912.2 L1540.0 911.9 L1540.5 911.8 L1541.0 912.1 L1541.5 912.0 L1542.0 911.1 L1542.5 911.9 L1543.0 911.6 L1543.5 910.6 L1544.0 911.9 L1544.5 910.8 L1545.0 910.5 L1545.5 911.1 L1546.0 911.1 L1546.5 911.8 L1547.0 910.9 L1547.5 910.9 L1548.0 911.4 L1548.5 910.4 L1549.0 911.0 L1549.5 910.4 L1550.0 910.6 L1550.5 911.0 L1551.0 910.5 L1551.5 910.7 L1552.0 911.4 L1552.5 911.0 L1553.0 910.9 L1553.5 910.4 L1554.0 911.1 L1554.5 910.9 L1555.0 911.0 L1555.5 911.2 L1556.0 910.4 L1556.5 911.3 L1557.0 910.8 L1557.5 910.0 L1558.0 910.8 L1558.5 909.9 L1559.0 910.0 L1559.5 909.7 L1560.0 911.0 L1560.5 910.0 L1561.0 909.6 L1561.5 911.1 L1562.0 909.9 L1562.5 910.3 L1563.0 910.1 L1563.5 909.9 L1564.0 909.7 L1564.5 910.5 L1565.0 909.7 L1565.5 910.8 L1566.0 910.6 L1566.5 909.4 L1567.0 909.9 L1567.5 910.6 L1568.0 909.7 L1568.5 909.8 L1569.0 909.3 L1569.5 910.0 L1570.0 910.3 L1570.5 909.9 L1571.0 909.2 L1571.5 909.3 L1572.0 909.3 L1572.5 910.2 L1573.0 909.7 L1573.5 910.0 L1574.0 910.1 L1574.5 909.9 L1575.0 910.2 L1575.5 909.3 L1576.0 909.6 L1576.5 909.9 L1577.0 909.9 L1577.5 908.9 L1578.0 909.1 L1578.5 909.1 L1579.0 909.0 L1579.5 910.1 L1580.0 909.8 L1580.5 910.0 L1581.0 909.8 L1581.5 909.5 L1582.0 909.6 L1582.5 909.0 L1583.0 908.6 L1583.5 909.7 L1584.0 909.1 L1584.5 909.2 L1585.0 908.6 L1585.5 908.4 L1586.0 909.7 L1586.5 908.4 L1587.0 909.2 L1587.5 909.1 L1588.0 909.2 L1588.5 908.9 L1589.0 908.4 L1589.5 909.3 L1590.0 908.2 L1590.5 909.4 L1591.0 909.4 L1591.5 908.0 L1592.0 908.9 L1592.5 908.3 L1593.0 908.0 L1593.5 909.1 L1594.0 908.5 L1594.5 908.2 L1595.0 908.1 L1595.5 908.3 L1596.0 908.7 L1596.5 908.6 L1597.0 907.9 L1597.5 908.2 L1598.0 909.0 L1598.5 907.7 L1599.0 908.7 L1599.5 907.6 L1600.0 908.6 L1600.5 908.5 L1601.0 907.9 L1601.5 908.6 L1602.0 907.6 L1602.5 907.7 L1603.0 908.8 L1603.5 908.3 L1604.0 908.8 L1604.5 908.1 L1605.0 907.3 L1605.5 907.3 L1606.0 907.7 L1606.5 907.7 L1607.0 908.6 L1607.5 908.1 L1608.0 907.8 L1608.5 908.0 L1609.0 908.4 L1609.5 907.6 L1610.0 907.8 L1610.5 907.6 L1611.0 908.2 L1611.5 908.2 L1612.0 908.3 L1612.5 907.2 L1613.0 907.3 L1613.5 908.3 L1614.0 907.6 L1614.5 907.0 L1615.0 907.2 L1615.5 906.8 L1616.0 906.8 L1616.5 907.3 L1617.0 907.8 L1617.5 907.3 L1618.0 907.1 L1618.5 907.3 L1619.0 907.5 L1619.5 907.7 L1620.0 907.7 L1620.5 907.5 L1621.0 907.0 L1621.5 906.6 L1622.0 907.1 L1622.5 907.7 L1623.0 907.7 L1623.5 906.5 L1624.0 907.4 L1624.5 906.9 L1625.0 906.5 L1625.5 907.6 L1626.0 906.5 L1626.5 907.6 L1627.0 907.1 L1627.5 906.5 L1628.0 906.9 L1628.5 907.4 L1629.0 906.4 L1629.5 906.5 L1630.0 906.1 L1630.5 906.3 L1631.0 906.8 L1631.5 907.1 L1632.0 906.3 L1632.5 907.0 L1633.0 907.1 L1633.5 906.2 L1634.0 906.9 L1634.5 905.9 L1635.0 906.5 L1635.5 906.5 L1636.0 906.9 L1636.5 906.6 L1637.0 905.8 L1637.5 906.5 L1638.0 905.6 L1638.5 906.9 L1639.0 906.1 L1639.5 906.1 L1640.0 906.6 L1640.5 906.4 L1641.0 906.0 L1641.5 906.5 L1642.0 905.5 L1642.5 905.5 L1643.0 906.5 L1643.5 905.6 L1644.0 906.1 L1644.5 905.7 L1645.0 905.5 L1645.5 905.2 L1646.0 906.1 L1646.5 906.2 L1647.0 905.2 L1647.5 905.8 L1648.0 905.2 L1648.5 905.8 L1649.0 905.5 L1649.5 904.9 L1650.0 906.2 L1650.5 906.0 L1651.0 905.4 L1651.5 906.0 L1652.0 905.6 L1652.5 904.8 L1653.0 905.2 L1653.5 905.8 L1654.0 906.0 L1654.5 905.4 L1655.0 905.4 L1655.5 905.8 L1656.0 904.7 L1656.5 904.9 L1657.0 904.5 L1657.5 905.5 L1658.0 905.8 L1658.5 904.5 L1659.0 904.7 L1659.5 904.6 L1660.0 905.4 L1660.5 905.3 L1661.0 904.2 L1661.5 904.9 L1662.0 905.4 L1662.5 904.3 L1663.0 904.3 L1663.5 904.3 L1664.0 905.2 L1664.5 904.3 L1665.0 904.1 L1665.5 903.8 L1666.0 905.2 L1666.5 904.1 L1667.0 904.1 L1667.5 905.0 L1668.0 904.3 L1668.5 904.8 L1669.0 904.9 L1669.5 903.8 L1670.0 904.7 L1670.5 904.2 L1671.0 904.2 L1671.5 903.5 L1672.0 903.8 L1672.5 903.9 L1673.0 903.9 L1673.5 903.9 L1674.0 904.3 L1674.5 904.1 L1675.0 903.6 L1675.5 903.9 L1676.0 904.1 L1676.5 904.4 L1677.0 904.3 L1677.5 904.1 L1678.0 904.0 L1678.5 903.9 L1679.0 904.2 L1679.5 903.4 L1680.0 904.2 L1680.5 904.3 L1681.0 904.1 L1681.5 903.2 L1682.0 902.9 L1682.5 903.1 L1683.0 904.2 L1683.5 904.1 L1684.0 904.2 L1684.5 903.5 L1685.0 902.9 L1685.5 903.7 L1686.0 904.0 L1686.5 903.2 L1687.0 902.6 L1687.5 902.9 L1688.0 903.2 L1688.5 902.7 L1689.0 902.7 L1689.5 903.6 L1690.0 903.7 L1690.5 903.0 L1691.0 903.3 L1691.5 903.7 L1692.0 902.5 L1692.5 902.8 L1693.0 902.2 L1693.5 902.6 L1694.0 902.7 L1694.5 903.2 L1695.0 902.9 L1695.5 902.4 L1696.0 902.1 L1696.5 902.1 L1697.0 902.1 L1697.5 902.0 L1698.0 902.3 L1698.5 903.1 L1699.0 902.9 L1699.5 902.1 L1700.0 901.9 L1700.5 902.7 L1701.0 903.2 L1701.5 902.1 L1702.0 902.8 L1702.5 903.0 L1703.0 902.7 L1703.5 902.5 L1704.0 902.5 L1704.5 902.6 L1705.0 902.8 L1705.5 901.6 L1706.0 902.1 L1706.5 902.1 L1707.0 902.0 L1707.5 901.5 L1708.0 902.7 L1708.5 901.8 L1709.0 901.5 L1709.5 901.9 L1710.0 902.3 L1710.5 901.7 L1711.0 901.9 L1711.5 901.9 L1712.0 902.3 L1712.5 901.9 L1713.0 902.0 L1713.5 901.4 L1714.0 902.3 L1714.5 901.2 L1715.0 901.5 L1715.5 901.8 L1716.0 901.4 L1716.5 901.7 L1717.0 901.0 L1717.5 901.0 L1718.0 901.1 L1718.5 901.9 L1719.0 900.8 L1719.5 900.6 L1720.0 900.7 L1720.5 901.5 L1721.0 901.5 L1721.5 901.7 L1722.0 901.8 L1722.5 901.1 L1723.0 901.6 L1723.5 900.5 L1724.0 901.6 L1724.5 900.9 L1725.0 901.1 L1725.5 901.5 L1726.0 901.5 L1726.5 900.8 L1727.0 901.4 L1727.5 900.3 L1728.0 900.2 L1728.5 900.8 L1729.0 901.0 L1729.5 901.3 L1730.0 900.8 L1730.5 900.9 L1731.0 900.0 L1731.5 900.3 L1732.0 901.3 L1732.5 900.5 L1733.0 900.7 L1733.5 900.3 L1734.0 901.2 L1734.5 900.6 L1735.0 901.2 L1735.5 900.5 L1736.0 900.6 L1736.5 900.1 L1737.0 899.7 L1737.5 899.7 L1738.0 900.2 L1738.5 900.4 L1739.0 899.8 L1739.5 900.7 L1740.0 900.7 L1740.5 900.4 L1741.0 899.8 L1741.5 900.2 L1742.0 899.3 L1742.5 899.9 L1743.0 899.7 L1743.5 900.0 L1744.0 900.1 L1744.5 899.9 L1745.0 899.2 L1745.5 899.9 L1746.0 899.6 L1746.5 899.6 L1747.0 899.5 L1747.5 900.2 L1748.0 899.4 L1748.5 899.4 L1749.0 899.2 L1749.5 900.2 L1750.0 899.6 L1750.5 899.7 L1751.0 899.6" fill="none" stroke="#83309f" stroke-width="1" shape-rendering="crispEdges" />
<line x1="3" x2="1718" y1="160.5" y2="160.5" class="zd"/>
<line x1="3" x2="1718" y1="277.5" y2="277.5" class="zd"/>
<line x1="3" x2="1718" y1="348.5" y2="348.5" class="zd"/>
<line x1="3" x2="1751" y1="477.5" y2="477.5" class="zd"/>
<line x1="3" x2="1718" y1="582.5" y2="582.5" class="zd"/>
<line x1="3" x2="1718" y1="862.5" y2="862.5" class="zd"/>
<line x1="3" x2="1718" y1="975.5" y2="975.5" class="zd"/>
<text x="55.9" y="751" class="tl">0 s</text>
<text x="230.7" y="751" class="tl">2.4 ms</text>
<text x="405.5" y="751" class="tl">4.8 ms</text>
<text x="580.3" y="751" class="tl">7.2 ms</text>
<text x="755.1" y="751" class="tl">9.6 ms</text>
<text x="929.9" y="751" class="tl">12 ms</text>
<text x="1104.7" y="751" class="tl">14.4 ms</text>
<text x="1279.5" y="751" class="tl">16.8 ms</text>
<text x="1454.3" y="751" class="tl">19.2 ms</text>
<text x="1629.1" y="751" class="tl">21.6 ms</text>
<line x1="55.5" x2="55.5" y1="68" y2="636" class="zd"/>
<line x1="55.5" x2="55.5" y1="670" y2="992" class="zd"/>
<path d="M8 102.5 H30 L41.6 115.0 L30 127.5 H8 Q6.3 127.5 6.3 125.8 V104.2 Q6.3 102.5 8 102.5Z" fill="#1f1c0a" stroke="#f7ee1e" stroke-width="1.4" stroke-linejoin="round"/><text x="23" y="118.4" class="tagt" fill="#f7ee1e">C 1</text>
<path d="M8 219.5 H30 L41.6 232.0 L30 244.5 H8 Q6.3 244.5 6.3 242.8 V221.2 Q6.3 219.5 8 219.5Z" fill="#071a1c" stroke="#22cbd7" stroke-width="1.4" stroke-linejoin="round"/><text x="23" y="235.4" class="tagt" fill="#22cbd7">C 2</text>
<path d="M8 336.5 H30 L41.6 349.0 L30 361.5 H8 Q6.3 361.5 6.3 359.8 V338.2 Q6.3 336.5 8 336.5Z" fill="#1e0a0e" stroke="#e8314f" stroke-width="1.4" stroke-linejoin="round"/><text x="23" y="352.4" class="tagt" fill="#fff">C 3</text>
<path d="M8 453.5 H30 L41.6 466.0 L30 478.5 H8 Q6.3 478.5 6.3 476.8 V455.2 Q6.3 453.5 8 453.5Z" fill="#141c0a" stroke="#8cc63f" stroke-width="1.4" stroke-linejoin="round"/><text x="23" y="469.4" class="tagt" fill="#8cc63f">C 4</text>
<path d="M8 570.5 H30 L41.6 583.0 L30 595.5 H8 Q6.3 595.5 6.3 593.8 V572.2 Q6.3 570.5 8 570.5Z" fill="#1f1409" stroke="#f08c28" stroke-width="1.4" stroke-linejoin="round"/><text x="23" y="586.4" class="tagt" fill="#f08c28">C 5</text>
<path d="M8 687.5 H30 L41.6 700.0 L30 712.5 H8 Q6.3 712.5 6.3 710.8 V689.2 Q6.3 687.5 8 687.5Z" fill="#2a2acc" stroke="#2a2acc" stroke-width="0.4" stroke-linejoin="round"/><text x="23" y="703.4" class="tagt" fill="#fff">C 6</text>
<path d="M8 849.5 H30 L41.6 862.0 L30 874.5 H8 Q6.3 874.5 6.3 872.8 V851.2 Q6.3 849.5 8 849.5Z" fill="#1f1409" stroke="#f08c28" stroke-width="1.4" stroke-linejoin="round"/><text x="23" y="865.4" class="tagt" fill="#f08c28">M 1</text>
<path d="M8 963.0 H30 L41.6 975.5 L30 988.0 H8 Q6.3 988.0 6.3 986.3 V964.7 Q6.3 963.0 8 963.0Z" fill="#0e0612" stroke="#83309f" stroke-width="1.4" stroke-linejoin="round"/><text x="23" y="978.9" class="tagt" fill="#fff">M 2</text>
<text x="53.4" y="119.3" class="wl" fill="#f7ee1e" textLength="98.3" lengthAdjust="spacing">U_loop,coil</text>
<text x="54.2" y="236.3" class="wl" fill="#22cbd7" textLength="76.8" lengthAdjust="spacing">U_Bt,coil</text>
<text x="54.2" y="353.3" class="wl" fill="#e8314f" textLength="92.6" lengthAdjust="spacing">U_Rog,coil</text>
<text x="53.7" y="470.3" class="wl" fill="#8cc63f" textLength="86.8" lengthAdjust="spacing">U_Photod</text>
<text x="53.7" y="587.3" class="wl" fill="#f08c28" textLength="102.8" lengthAdjust="spacing">U_Diamagn</text>
<text x="53.3" y="704.5" class="wl" fill="#2a2acc" textLength="63.4" lengthAdjust="spacing">Trigger</text>
<text x="52.8" y="864.0" class="wl" fill="#f08c28" textLength="29.0" lengthAdjust="spacing">B_t</text>
<text x="53.6" y="980.0" class="wl" fill="#83309f" textLength="25.5" lengthAdjust="spacing">I_p</text>
<path d="M45 57 H65.5 L55.4 67.3Z" fill="#f5891f"/>
<path d="M46.3 643.2 H64 V662 H59.2 L55.3 669.2 L51.4 662 H46.3Z" fill="#000" stroke="#f08c28" stroke-width="2" stroke-linejoin="miter"/>
<path d="M50.4 648.2 H60.4 M55.4 648.2 V659.2" stroke="#f08c28" stroke-width="2.1" fill="none"/>
<path d="M1729.2 684.4 L1741.6 674.4 L1742.6 674.8 V682.4 H1751 V686.6 H1742.6 V694.2 L1741.6 694.6Z" fill="#2a2acc" stroke="#d8d8e8" stroke-width="0.9" stroke-linejoin="round"/>
<path d="M1709.8 64 H1743 Q1744.3 64 1744.3 65.3 V96.8 Q1744.3 98.6 1742.9 97.2Z" fill="#4d4d4d"/>
<circle cx="1737.2" cy="70.3" r="4.1" fill="#595959" stroke="#9a9a9a" stroke-width="1.3"/>
<path d="M1733.8 74 L1728.2 79.6" stroke="#9a9a9a" stroke-width="2.4" stroke-linecap="round"/>

</g>
<path d="M593 36.5 H586.5 V52.5 H593" fill="none" stroke="#e4e4e4" stroke-width="1.1"/>
<path d="M1160.5 36.5 H1167 V52.5 H1160.5" fill="none" stroke="#e4e4e4" stroke-width="1.2"/>
<rect x="587" y="44" width="579.5" height="2" fill="#bdbdbd"/>
<path d="M595.8 33 H611 L603.4 37.8Z" fill="#f5891f"/>
<path d="M597.2 40.7 H609.6 V52 H606 L603.4 56.2 L600.8 52 H597.2Z" fill="#000" stroke="#f08c28" stroke-width="1.4"/>
<path d="M600.2 44 H606.6 M603.4 44 V50.8" stroke="#f08c28" stroke-width="2" fill="none"/>

</svg>
<div id="side" class="abs"></div>
<div class="abs" style="left:1770px;top:30px;width:149px;text-align:center;font-weight:bold;font-size:14.8px;line-height:17px;color:#f4f4f4;letter-spacing:0.2px">Add New...</div>
<div class="sbtn" style="left:1777px;top:54px">Cursors</div>
<div class="sbtn" style="left:1849px;top:54px">Callout</div>
<div class="sbtn" style="left:1777px;top:100px">Measure</div>
<div class="sbtn" style="left:1849px;top:100px">Search</div>
<div class="sbtn" style="left:1777px;top:146px">Results<br>Table</div>
<div class="sbtn" style="left:1849px;top:146px">Plot</div>
<div class="sep" style="top:189px"></div>
<div class="sbtn" style="left:1777px;top:196px;padding-bottom:0"><svg width="32" height="30" viewBox="0 0 32 30"><rect x="4.5" y="3.5" width="22" height="19" fill="none" stroke="#c9c9c9" stroke-width="1.6" stroke-dasharray="4 2.2"/><circle cx="17.5" cy="11.5" r="4.6" fill="none" stroke="#c9c9c9" stroke-width="1.5"/><path d="M14 15 L9.5 19" stroke="#c9c9c9" stroke-width="2.4" stroke-linecap="round"/><path d="M21.5 17 L30 21.2 L26.6 22.6 L28.6 26.4 L27 27.2 L25 23.4 L22.6 25.8Z" fill="#c9c9c9"/></svg></div>
<div class="sbtn" style="left:1849px;top:196px">More...</div>
<div class="sep" style="top:241px"></div>
<div class="abs" style="left:1759.5px;top:500.5px;width:5px;height:5px;border-radius:3px;background:#d0d0d0"></div>
<div class="abs" style="left:1759.5px;top:509.5px;width:5px;height:5px;border-radius:3px;background:#d0d0d0"></div>
<div class="abs" style="left:1759.5px;top:518px;width:5px;height:5px;border-radius:3px;background:#d0d0d0"></div>

<div class="badge" style="left:3px;top:984px;height:95px">
<div class="bh" style="background:#4d4a24;color:#f2ea2c">Ch 1</div>
<div class="abs" style="left:0;top:19px;width:90px;height:5px;background:linear-gradient(#8e8e8e,#c4c4c4 60%%,#d0d0d0)"></div>
<div class="clip"><svg class="abs" style="left:0px;top:0.5px" width="17" height="16" viewBox="0 0 17 16"><path d="M7.6 1 L15.3 15 H0.6Z" fill="#f6ef22" stroke="#3d3d6b" stroke-width="0.9" stroke-linejoin="round"/><rect x="7" y="5" width="1.2" height="6.2" fill="#8a8a30"/><rect x="7" y="12.2" width="1.2" height="1.3" fill="#8a8a30"/></svg>Clipping</div>
<div class="bt" style="top:41.5px">5 V/div</div>
<div class="bt" style="top:61.3px">1 M&Omega;</div>
<div class="bt" style="top:79.6px">200 kHz</div>
<span class="bw" style="top:80px"><b style="font-size:9.5px">B</b><span style="position:relative;top:2.2px;font-size:9px;font-weight:bold">w</span></span>
</div>
<div class="badge" style="left:98px;top:984px;height:95px">
<div class="bh" style="background:#24474b;color:#22c7d6">Ch 2</div>
<div class="abs" style="left:0;top:19px;width:90px;height:5px;background:linear-gradient(#8e8e8e,#c4c4c4 60%%,#d0d0d0)"></div>
<div class="clip"><svg class="abs" style="left:0px;top:0.5px" width="17" height="16" viewBox="0 0 17 16"><path d="M7.6 1 L15.3 15 H0.6Z" fill="#f6ef22" stroke="#3d3d6b" stroke-width="0.9" stroke-linejoin="round"/><rect x="7" y="5" width="1.2" height="6.2" fill="#8a8a30"/><rect x="7" y="12.2" width="1.2" height="1.3" fill="#8a8a30"/></svg>Clipping</div>
<div class="bt" style="top:41.5px">130 mV/div</div>
<div class="bt" style="top:61.3px">1 M&Omega;</div>
<div class="bt" style="top:79.6px">200 kHz</div>
<span class="bw" style="top:80px"><b style="font-size:9.5px">B</b><span style="position:relative;top:2.2px;font-size:9px;font-weight:bold">w</span></span>
</div>
<div class="badge" style="left:193px;top:984px;height:95px">
<div class="bh" style="background:#4a272d;color:#ffffff">Ch 3</div>
<div class="abs" style="left:0;top:19px;width:90px;height:5px;background:linear-gradient(#8e8e8e,#c4c4c4 60%%,#d0d0d0)"></div>
<div class="clip"><svg class="abs" style="left:0px;top:0.5px" width="17" height="16" viewBox="0 0 17 16"><path d="M7.6 1 L15.3 15 H0.6Z" fill="#f6ef22" stroke="#3d3d6b" stroke-width="0.9" stroke-linejoin="round"/><rect x="7" y="5" width="1.2" height="6.2" fill="#8a8a30"/><rect x="7" y="12.2" width="1.2" height="1.3" fill="#8a8a30"/></svg>Clipping</div>
<div class="bt" style="top:41.5px">100 mV/div</div>
<div class="bt" style="top:61.3px">1 M&Omega;</div>
<div class="bt" style="top:79.6px">200 kHz</div>
<span class="bw" style="top:80px"><b style="font-size:9.5px">B</b><span style="position:relative;top:2.2px;font-size:9px;font-weight:bold">w</span></span>
</div>
<div class="badge" style="left:288px;top:999px;height:80px">
<div class="bh" style="background:#34442a;color:#8cd03f">Ch 4</div>
<div class="abs" style="left:0;top:19px;width:90px;height:3px;background:linear-gradient(#8e8e8e,#c8c8c8)"></div>
<div class="bt" style="top:22.6px">200 mV/div</div>
<div class="bt" style="top:42.4px">1 M&Omega;</div>
<div class="bt" style="top:60.6px">200 kHz</div>
<span class="bw" style="top:61px"><b style="font-size:9.5px">B</b><span style="position:relative;top:2.2px;font-size:9px;font-weight:bold">w</span></span>
</div>
<div class="badge" style="left:383px;top:999px;height:80px">
<div class="bh" style="background:#4a3422;color:#f08c28">Ch 5</div>
<div class="abs" style="left:0;top:19px;width:90px;height:3px;background:linear-gradient(#8e8e8e,#c8c8c8)"></div>
<div class="bt" style="top:22.6px">1 V/div</div>
<div class="bt" style="top:42.4px">1 M&Omega;</div>
<div class="bt" style="top:60.6px">200 kHz</div>
<span class="bw" style="top:61px"><b style="font-size:9.5px">B</b><span style="position:relative;top:2.2px;font-size:9px;font-weight:bold">w</span></span>
</div>
<div class="badge" style="left:478px;top:984px;height:95px">
<div class="bh" style="background:#2a2acc;color:#ffffff">Ch 6</div>
<div class="abs" style="left:0;top:19px;width:90px;height:5px;background:linear-gradient(#8e8e8e,#c4c4c4 60%%,#d0d0d0)"></div>
<div class="clip"><svg class="abs" style="left:0px;top:0.5px" width="17" height="16" viewBox="0 0 17 16"><path d="M7.6 1 L15.3 15 H0.6Z" fill="#f6ef22" stroke="#3d3d6b" stroke-width="0.9" stroke-linejoin="round"/><rect x="7" y="5" width="1.2" height="6.2" fill="#8a8a30"/><rect x="7" y="12.2" width="1.2" height="1.3" fill="#8a8a30"/></svg>Clipping</div>
<div class="bt" style="top:41.5px">750 mV/div</div>
<div class="bt" style="top:61.3px">1 M&Omega;</div>
<div class="bt" style="top:79.6px">200 kHz</div>
<span class="bw" style="top:80px"><b style="font-size:9.5px">B</b><span style="position:relative;top:2.2px;font-size:9px;font-weight:bold">w</span></span>
</div>
<div class="badge" style="left:573px;top:999px;height:80px">
<div class="bh" style="background:#4a3422;color:#f0932b"><span style="letter-spacing:0.5px">Math 1</span></div>
<div class="abs" style="left:0;top:19px;width:90px;height:3px;background:linear-gradient(#8e8e8e,#c8c8c8)"></div>
<div class="bt" style="top:22.6px;font-weight:bold">59.5551 ...</div>
<div class="bt" style="top:41.8px"><span style="letter-spacing:0.45px">Intg(ch2)...</span></div>
</div>
<div class="badge" style="left:668px;top:999px;height:80px">
<div class="bh" style="background:#2d2034;color:#ffffff"><span style="letter-spacing:0.5px">Math 2</span></div>
<div class="abs" style="left:0;top:19px;width:90px;height:3px;background:linear-gradient(#8e8e8e,#c8c8c8)"></div>
<div class="bt" style="top:22.6px;font-weight:bold">347.7845...</div>
<div class="bt" style="top:41.8px"><span style="letter-spacing:0.5px">-intg(ch3...</span></div>
</div>
<div class="abs" style="left:1117px;top:999px;width:1px;height:78px;background:#5c5650"></div>
<div class="abs" style="left:1268px;top:999px;width:1px;height:78px;background:#5c5650"></div>
<div class="abs" style="left:1811px;top:999px;width:1px;height:78px;background:#5c5650"></div>
<div class="abtn" style="left:1128px"><i style="background:#b31f24"></i>Add<br>New<br>Math</div>
<div class="abtn" style="left:1173px"><i style="background:#c4c4e0"></i>Add<br>New<br>Ref</div>
<div class="abtn" style="left:1218px"><i style="background:#c154f2"></i>Add<br>New<br>Bus</div>
<div class="ibox" style="left:1279px;width:200px"><div class="ih">Horizontal</div><div class="abs" style="left:0;top:19px;width:100%;height:3px;background:linear-gradient(#8e8e8e,#c8c8c8)"></div><div class="it" style="left:6px;top:21px">2.4 ms/div</div><div class="it" style="left:112px;top:21px">24 ms</div><div class="it" style="left:6px;top:40.5px;letter-spacing:-0.45px">SR: 1 MS/s</div><div class="it" style="left:113px;top:40.5px">1 &micro;s/pt</div><div class="it" style="left:6px;top:59.4px;letter-spacing:-0.1px">RL: 24 kpts</div><div class="it" style="left:126px;top:59.4px">3%</div><svg class="abs" style="left:111.4px;top:60.6px" width="10" height="14" viewBox="0 0 10 14"><path d="M1 1 H9 V9.5 H6.6 L5 12.6 L3.4 9.5 H1Z" fill="#000" stroke="#f08c28" stroke-width="1.4"/><path d="M3 3.4 H7 M5 3.4 V8" stroke="#fff" stroke-width="1.3" fill="none"/></svg></div>
<div class="ibox" style="left:1484px;width:160px"><div class="ih">Trigger</div><div class="abs" style="left:0;top:19px;width:100%;height:3px;background:linear-gradient(#8e8e8e,#c8c8c8)"></div><div class="abs" style="left:6px;top:22.7px;width:30px;height:17px;border-radius:5px;background:#2626c6;border:1px solid #000;color:#fff;font-size:16px;line-height:15px;text-align:center">6</div><svg class="abs" style="left:44px;top:24.2px" width="20" height="14" viewBox="0 0 20 14"><path d="M2 11.5 H6 L13.5 2.5 H17.5" fill="none" stroke="#3a3a9c" stroke-width="1.2"/></svg><div class="it" style="left:72px;top:21px">3.99 V</div></div>
<div class="ibox" style="left:1649px;width:150px"><div class="ih">Acquisition</div><div class="abs" style="left:0;top:19px;width:100%;height:3px;background:linear-gradient(#8e8e8e,#c8c8c8)"></div><div class="it" style="left:6px;top:21px">Manual,</div><div class="it" style="left:87px;top:21px">Analyze</div><div class="it" style="left:6px;top:40.5px">High Res: 16 bits</div><div class="it" style="left:6px;top:59.4px">Single: 1 /1</div></div>
<div class="abs" style="left:1822px;top:998px;width:90px;height:36px;border-radius:6px;background:#ff1f27;border:1px solid #8c3a3a;color:#fff;font-weight:bold;font-size:13px;line-height:32px;text-align:center;letter-spacing:0.1px">Stopped</div>
<div class="abs" style="left:1822px;top:1042px;width:90px;height:36px;border-radius:5px;background:#c8c8c8;color:#000;font-size:15.2px;line-height:17.5px;text-align:center;padding-top:1px;white-space:nowrap">24 Oct 2023<br>7:44:02 PM</div>
</body></html>
